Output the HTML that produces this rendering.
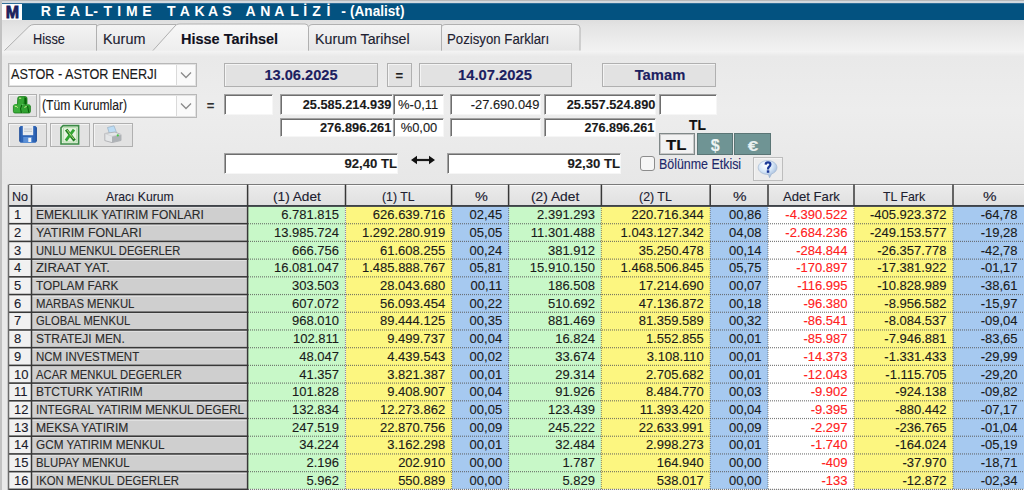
<!DOCTYPE html><html><head><meta charset="utf-8"><style>html,body{margin:0;padding:0;width:1024px;height:490px;overflow:hidden;position:relative;background:#e9e9e9}</style></head><body><div style="position:absolute;left:0.00px;top:0.00px;width:1024.00px;height:490.00px;background:#e9e9e9;"></div><div style="position:absolute;left:0.00px;top:0.00px;width:1024.00px;height:1.00px;background:#b9b9b9;"></div><div style="position:absolute;left:0.00px;top:1.00px;width:1024.00px;height:2.00px;background:#d3d9de;"></div><div style="position:absolute;left:2.20px;top:3.00px;width:1021.80px;height:17.00px;background:#035280;"></div><div style="position:absolute;left:2.20px;top:3.00px;width:1021.80px;height:1.00px;background:#2f6e98;"></div><div style="position:absolute;left:2.20px;top:4.00px;width:20.30px;height:16.00px;background:#fdfdfd;"></div><div style="position:absolute;top:4.66px;font:bold 16px/16px 'Liberation Sans', sans-serif;color:#1b1f5c;white-space:nowrap;-webkit-text-stroke:0.12px #1b1f5c;left:-287.50px;width:600px;text-align:center;transform-origin:50% 0;-webkit-text-stroke:0.8px #1b1f5c;">M</div><div style="position:absolute;top:4.25px;font:bold 14px/14px 'Liberation Sans', sans-serif;color:#ffffff;white-space:nowrap;-webkit-text-stroke:0.12px #ffffff;left:-254.20px;width:600px;text-align:center;transform-origin:50% 0;-webkit-text-stroke:0px;">R</div><div style="position:absolute;top:4.25px;font:bold 14px/14px 'Liberation Sans', sans-serif;color:#ffffff;white-space:nowrap;-webkit-text-stroke:0.12px #ffffff;left:-239.30px;width:600px;text-align:center;transform-origin:50% 0;-webkit-text-stroke:0px;">E</div><div style="position:absolute;top:4.25px;font:bold 14px/14px 'Liberation Sans', sans-serif;color:#ffffff;white-space:nowrap;-webkit-text-stroke:0.12px #ffffff;left:-225.00px;width:600px;text-align:center;transform-origin:50% 0;-webkit-text-stroke:0px;">A</div><div style="position:absolute;top:4.25px;font:bold 14px/14px 'Liberation Sans', sans-serif;color:#ffffff;white-space:nowrap;-webkit-text-stroke:0.12px #ffffff;left:-211.00px;width:600px;text-align:center;transform-origin:50% 0;-webkit-text-stroke:0px;">L</div><div style="position:absolute;top:4.25px;font:bold 14px/14px 'Liberation Sans', sans-serif;color:#ffffff;white-space:nowrap;-webkit-text-stroke:0.12px #ffffff;left:-204.50px;width:600px;text-align:center;transform-origin:50% 0;-webkit-text-stroke:0px;">-</div><div style="position:absolute;top:4.25px;font:bold 14px/14px 'Liberation Sans', sans-serif;color:#ffffff;white-space:nowrap;-webkit-text-stroke:0.12px #ffffff;left:-192.20px;width:600px;text-align:center;transform-origin:50% 0;-webkit-text-stroke:0px;">T</div><div style="position:absolute;top:4.25px;font:bold 14px/14px 'Liberation Sans', sans-serif;color:#ffffff;white-space:nowrap;-webkit-text-stroke:0.12px #ffffff;left:-180.90px;width:600px;text-align:center;transform-origin:50% 0;-webkit-text-stroke:0px;">I</div><div style="position:absolute;top:4.25px;font:bold 14px/14px 'Liberation Sans', sans-serif;color:#ffffff;white-space:nowrap;-webkit-text-stroke:0.12px #ffffff;left:-168.20px;width:600px;text-align:center;transform-origin:50% 0;-webkit-text-stroke:0px;">M</div><div style="position:absolute;top:4.25px;font:bold 14px/14px 'Liberation Sans', sans-serif;color:#ffffff;white-space:nowrap;-webkit-text-stroke:0.12px #ffffff;left:-153.20px;width:600px;text-align:center;transform-origin:50% 0;-webkit-text-stroke:0px;">E</div><div style="position:absolute;top:4.25px;font:bold 14px/14px 'Liberation Sans', sans-serif;color:#ffffff;white-space:nowrap;-webkit-text-stroke:0.12px #ffffff;left:-128.80px;width:600px;text-align:center;transform-origin:50% 0;-webkit-text-stroke:0px;">T</div><div style="position:absolute;top:4.25px;font:bold 14px/14px 'Liberation Sans', sans-serif;color:#ffffff;white-space:nowrap;-webkit-text-stroke:0.12px #ffffff;left:-115.20px;width:600px;text-align:center;transform-origin:50% 0;-webkit-text-stroke:0px;">A</div><div style="position:absolute;top:4.25px;font:bold 14px/14px 'Liberation Sans', sans-serif;color:#ffffff;white-space:nowrap;-webkit-text-stroke:0.12px #ffffff;left:-100.50px;width:600px;text-align:center;transform-origin:50% 0;-webkit-text-stroke:0px;">K</div><div style="position:absolute;top:4.25px;font:bold 14px/14px 'Liberation Sans', sans-serif;color:#ffffff;white-space:nowrap;-webkit-text-stroke:0.12px #ffffff;left:-87.00px;width:600px;text-align:center;transform-origin:50% 0;-webkit-text-stroke:0px;">A</div><div style="position:absolute;top:4.25px;font:bold 14px/14px 'Liberation Sans', sans-serif;color:#ffffff;white-space:nowrap;-webkit-text-stroke:0.12px #ffffff;left:-73.00px;width:600px;text-align:center;transform-origin:50% 0;-webkit-text-stroke:0px;">S</div><div style="position:absolute;top:4.25px;font:bold 14px/14px 'Liberation Sans', sans-serif;color:#ffffff;white-space:nowrap;-webkit-text-stroke:0.12px #ffffff;left:-49.40px;width:600px;text-align:center;transform-origin:50% 0;-webkit-text-stroke:0px;">A</div><div style="position:absolute;top:4.25px;font:bold 14px/14px 'Liberation Sans', sans-serif;color:#ffffff;white-space:nowrap;-webkit-text-stroke:0.12px #ffffff;left:-34.70px;width:600px;text-align:center;transform-origin:50% 0;-webkit-text-stroke:0px;">N</div><div style="position:absolute;top:4.25px;font:bold 14px/14px 'Liberation Sans', sans-serif;color:#ffffff;white-space:nowrap;-webkit-text-stroke:0.12px #ffffff;left:-20.70px;width:600px;text-align:center;transform-origin:50% 0;-webkit-text-stroke:0px;">A</div><div style="position:absolute;top:4.25px;font:bold 14px/14px 'Liberation Sans', sans-serif;color:#ffffff;white-space:nowrap;-webkit-text-stroke:0.12px #ffffff;left:-5.40px;width:600px;text-align:center;transform-origin:50% 0;-webkit-text-stroke:0px;">L</div><div style="position:absolute;top:4.25px;font:bold 14px/14px 'Liberation Sans', sans-serif;color:#ffffff;white-space:nowrap;-webkit-text-stroke:0.12px #ffffff;left:5.10px;width:600px;text-align:center;transform-origin:50% 0;-webkit-text-stroke:0px;">İ</div><div style="position:absolute;top:4.25px;font:bold 14px/14px 'Liberation Sans', sans-serif;color:#ffffff;white-space:nowrap;-webkit-text-stroke:0.12px #ffffff;left:16.50px;width:600px;text-align:center;transform-origin:50% 0;-webkit-text-stroke:0px;">Z</div><div style="position:absolute;top:4.25px;font:bold 14px/14px 'Liberation Sans', sans-serif;color:#ffffff;white-space:nowrap;-webkit-text-stroke:0.12px #ffffff;left:28.50px;width:600px;text-align:center;transform-origin:50% 0;-webkit-text-stroke:0px;">İ</div><div style="position:absolute;top:4.25px;font:bold 14px/14px 'Liberation Sans', sans-serif;color:#ffffff;white-space:nowrap;-webkit-text-stroke:0.12px #ffffff;left:43.50px;width:600px;text-align:center;transform-origin:50% 0;-webkit-text-stroke:0px;">-</div><div style="position:absolute;top:4.45px;font:bold 14px/14px 'Liberation Sans', sans-serif;color:#ffffff;white-space:nowrap;-webkit-text-stroke:0.12px #ffffff;left:349.94px;transform-origin:0 0;transform:scaleX(0.9718);-webkit-text-stroke:0px;">(Analist)</div><div style="position:absolute;left:0.00px;top:0.00px;width:2.00px;height:490.00px;background:#c2c2c2;"></div><div style="position:absolute;left:2.00px;top:20.00px;width:1022.00px;height:30.50px;background:linear-gradient(#dedede,#e4e4e4 20%,#f2f2f2);"></div><svg style="position:absolute;left:0;top:0" width="1024" height="60">
<defs><linearGradient id="tg" x1="0" y1="0" x2="0" y2="1"><stop offset="0" stop-color="#f4f4f4"/><stop offset="1" stop-color="#e6e6e6"/></linearGradient>
<linearGradient id="ta" x1="0" y1="0" x2="0" y2="1"><stop offset="0" stop-color="#f8f8f8"/><stop offset="1" stop-color="#eeeeee"/></linearGradient></defs>
<path d="M4.5 50.5 L29 26.5 Q31 24.5 34 24.5 L96.5 24.5 L96.5 50.5 Z" fill="url(#tg)"/>
<path d="M4.5 50.5 L29 26.5 Q31 24.5 34 24.5 L96.5 24.5 L96.5 50.5" fill="none" stroke="#b0b0b0" stroke-width="1"/>
<path d="M96.5 50.5 L96.5 28 Q96.5 24.5 101 24.5 L176 24.5 L153 50.5 Z" fill="url(#tg)"/>
<path d="M96.5 50.5 L96.5 28 Q96.5 24.5 101 24.5 L176 24.5" fill="none" stroke="#b0b0b0" stroke-width="1"/>
<path d="M308.5 50.5 L308.5 28 Q308.5 24.5 313 24.5 L441.5 24.5 L441.5 50.5 Z" fill="url(#tg)"/>
<path d="M308.5 50.5 L308.5 28 Q308.5 24.5 313 24.5 L441.5 24.5 L441.5 50.5" fill="none" stroke="#b0b0b0" stroke-width="1"/>
<path d="M441.5 50.5 L441.5 28 Q441.5 24.5 446 24.5 L576 24.5 Q580 24.5 580 28 L580 50.5 Z" fill="url(#tg)"/>
<path d="M441.5 50.5 L441.5 28 Q441.5 24.5 446 24.5 L576 24.5 Q580 24.5 580 28 L580 50.5" fill="none" stroke="#b0b0b0" stroke-width="1"/>
<path d="M153 50.5 L175 26 Q176.5 24 179 24 L305 24 Q308.5 24 308.5 27.5 L308.5 50.5 Z" fill="url(#ta)"/>
<path d="M153 50.5 L175 26 Q176.5 24 179 24 L305 24 Q308.5 24 308.5 27.5 L308.5 50.5" fill="none" stroke="#b0b0b0" stroke-width="1"/>
</svg><div style="position:absolute;top:31.95px;font:normal 14px/14px 'Liberation Sans', sans-serif;color:#202030;white-space:nowrap;-webkit-text-stroke:0.12px #202030;left:33.34px;transform-origin:0 0;transform:scaleX(0.9090);">Hisse</div><div style="position:absolute;top:31.95px;font:normal 14px/14px 'Liberation Sans', sans-serif;color:#202030;white-space:nowrap;-webkit-text-stroke:0.12px #202030;left:103.14px;transform-origin:0 0;transform:scaleX(1.0288);">Kurum</div><div style="position:absolute;top:31.95px;font:bold 14px/14px 'Liberation Sans', sans-serif;color:#101020;white-space:nowrap;-webkit-text-stroke:0.12px #101020;left:181.44px;transform-origin:0 0;transform:scaleX(1.0343);">Hisse Tarihsel</div><div style="position:absolute;top:31.95px;font:normal 14px/14px 'Liberation Sans', sans-serif;color:#202030;white-space:nowrap;-webkit-text-stroke:0.12px #202030;left:315.44px;transform-origin:0 0;transform:scaleX(1.0156);">Kurum Tarihsel</div><div style="position:absolute;top:31.95px;font:normal 14px/14px 'Liberation Sans', sans-serif;color:#202030;white-space:nowrap;-webkit-text-stroke:0.12px #202030;left:447.44px;transform-origin:0 0;transform:scaleX(0.9443);">Pozisyon Farkları</div><div style="position:absolute;left:2.00px;top:50.50px;width:1022.00px;height:133.50px;background:linear-gradient(#f4f4f4 0,#e9e9e9 4%,#ededed 45%,#e7e7e7);"></div><div style="position:absolute;left:8.00px;top:63.30px;width:189.00px;height:23.70px;background:#fff;border:1px solid #b8b8b8;box-sizing:border-box;box-shadow:inset 0 0 0 1px #e2e2e2;"></div><div style="position:absolute;left:176.00px;top:65.30px;width:19.00px;height:19.70px;background:#fafafa;border-left:1.5px solid #dadada;box-sizing:border-box;"></div><svg style="position:absolute;left:180.0px;top:71.2px" width="12" height="8"><path d="M1 1.5 L6 6.5 L11 1.5" fill="none" stroke="#8a8a8a" stroke-width="1.3"/></svg><div style="position:absolute;top:66.75px;font:normal 14px/14px 'Liberation Sans', sans-serif;color:#1a1a1a;white-space:nowrap;-webkit-text-stroke:0.12px #1a1a1a;left:10.54px;transform-origin:0 0;transform:scaleX(0.9053);">ASTOR - ASTOR ENERJI</div><div style="position:absolute;left:223.50px;top:63.30px;width:154.00px;height:24.00px;background:#e2e2e2;border:1px solid #b0b0b0;box-sizing:border-box;box-shadow:inset 1px 1px 0 #f4f4f4;"></div><div style="position:absolute;top:68.45px;font:bold 14px/14px 'Liberation Sans', sans-serif;color:#1c2060;white-space:nowrap;-webkit-text-stroke:0.12px #1c2060;left:0.50px;width:600px;text-align:center;transform-origin:50% 0;transform:scaleX(1.0436);">13.06.2025</div><div style="position:absolute;left:387.00px;top:63.30px;width:24.70px;height:24.00px;background:#e2e2e2;border:1px solid #b0b0b0;box-sizing:border-box;box-shadow:inset 1px 1px 0 #f4f4f4;"></div><div style="position:absolute;top:68.50px;font:bold 13px/13px 'Liberation Sans', sans-serif;color:#202020;white-space:nowrap;-webkit-text-stroke:0.12px #202020;left:99.30px;width:600px;text-align:center;transform-origin:50% 0;">=</div><div style="position:absolute;left:418.70px;top:63.30px;width:153.80px;height:24.00px;background:#e2e2e2;border:1px solid #b0b0b0;box-sizing:border-box;box-shadow:inset 1px 1px 0 #f4f4f4;"></div><div style="position:absolute;top:68.45px;font:bold 14px/14px 'Liberation Sans', sans-serif;color:#1c2060;white-space:nowrap;-webkit-text-stroke:0.12px #1c2060;left:195.40px;width:600px;text-align:center;transform-origin:50% 0;transform:scaleX(1.0550);">14.07.2025</div><div style="position:absolute;left:602.40px;top:63.00px;width:114.10px;height:23.90px;background:#e2e2e2;border:1px solid #b0b0b0;box-sizing:border-box;box-shadow:inset 1px 1px 0 #f4f4f4;"></div><div style="position:absolute;top:68.35px;font:bold 14px/14px 'Liberation Sans', sans-serif;color:#1c2060;white-space:nowrap;-webkit-text-stroke:0.12px #1c2060;left:359.50px;width:600px;text-align:center;transform-origin:50% 0;transform:scaleX(1.0550);">Tamam</div><div style="position:absolute;left:7.70px;top:93.70px;width:29.30px;height:23.80px;background:#e2e2e2;border:1px solid #b0b0b0;box-sizing:border-box;box-shadow:inset 1px 1px 0 #f4f4f4;"></div><div style="position:absolute;left:39.30px;top:94.00px;width:157.70px;height:23.50px;background:#fff;border:1px solid #b8b8b8;box-sizing:border-box;box-shadow:inset 0 0 0 1px #e2e2e2;"></div><div style="position:absolute;left:176.00px;top:96.00px;width:19.00px;height:19.50px;background:#fafafa;border-left:1.5px solid #dadada;box-sizing:border-box;"></div><svg style="position:absolute;left:180.0px;top:101.8px" width="12" height="8"><path d="M1 1.5 L6 6.5 L11 1.5" fill="none" stroke="#8a8a8a" stroke-width="1.3"/></svg><div style="position:absolute;top:98.15px;font:normal 14px/14px 'Liberation Sans', sans-serif;color:#1a1a1a;white-space:nowrap;-webkit-text-stroke:0.12px #1a1a1a;left:41.94px;transform-origin:0 0;transform:scaleX(0.8685);">(Tüm Kurumlar)</div><div style="position:absolute;top:98.50px;font:bold 13px/13px 'Liberation Sans', sans-serif;color:#303030;white-space:nowrap;-webkit-text-stroke:0.12px #303030;left:-89.50px;width:600px;text-align:center;transform-origin:50% 0;">=</div><div style="position:absolute;left:223.50px;top:94.00px;width:49.20px;height:20.50px;background:#fff;border-top:1px solid #a2a2a2;border-left:1px solid #a2a2a2;border-bottom:1px solid #f6f6f6;border-right:1px solid #f6f6f6;box-sizing:border-box;box-shadow:inset 1px 1px 0 #6e6e6e;"></div><div style="position:absolute;left:279.80px;top:94.00px;width:113.00px;height:20.50px;background:#fff;border-top:1px solid #a2a2a2;border-left:1px solid #a2a2a2;border-bottom:1px solid #f6f6f6;border-right:1px solid #f6f6f6;box-sizing:border-box;box-shadow:inset 1px 1px 0 #6e6e6e;"></div><div style="position:absolute;left:392.80px;top:94.00px;width:51.20px;height:20.50px;background:#fff;border-top:1px solid #a2a2a2;border-left:1px solid #a2a2a2;border-bottom:1px solid #f6f6f6;border-right:1px solid #f6f6f6;box-sizing:border-box;box-shadow:inset 1px 1px 0 #6e6e6e;"></div><div style="position:absolute;left:449.60px;top:94.00px;width:91.60px;height:20.50px;background:#fff;border-top:1px solid #a2a2a2;border-left:1px solid #a2a2a2;border-bottom:1px solid #f6f6f6;border-right:1px solid #f6f6f6;box-sizing:border-box;box-shadow:inset 1px 1px 0 #6e6e6e;"></div><div style="position:absolute;left:544.00px;top:94.00px;width:111.50px;height:20.50px;background:#fff;border-top:1px solid #a2a2a2;border-left:1px solid #a2a2a2;border-bottom:1px solid #f6f6f6;border-right:1px solid #f6f6f6;box-sizing:border-box;box-shadow:inset 1px 1px 0 #6e6e6e;"></div><div style="position:absolute;left:659.30px;top:94.00px;width:58.20px;height:20.50px;background:#fff;border-top:1px solid #a2a2a2;border-left:1px solid #a2a2a2;border-bottom:1px solid #f6f6f6;border-right:1px solid #f6f6f6;box-sizing:border-box;box-shadow:inset 1px 1px 0 #6e6e6e;"></div><div style="position:absolute;top:97.90px;font:bold 13px/13px 'Liberation Sans', sans-serif;color:#1a1a1a;white-space:nowrap;-webkit-text-stroke:0.12px #1a1a1a;right:632.68px;transform-origin:100% 0;transform:scaleX(0.9809);">25.585.214.939</div><div style="position:absolute;top:97.90px;font:normal 13px/13px 'Liberation Sans', sans-serif;color:#1a1a1a;white-space:nowrap;-webkit-text-stroke:0.12px #1a1a1a;left:118.20px;width:600px;text-align:center;transform-origin:50% 0;">%-0,11</div><div style="position:absolute;top:97.90px;font:normal 13px/13px 'Liberation Sans', sans-serif;color:#1a1a1a;white-space:nowrap;-webkit-text-stroke:0.12px #1a1a1a;right:484.48px;transform-origin:100% 0;transform:scaleX(0.9892);">-27.690.049</div><div style="position:absolute;top:97.90px;font:bold 13px/13px 'Liberation Sans', sans-serif;color:#1a1a1a;white-space:nowrap;-webkit-text-stroke:0.12px #1a1a1a;right:368.78px;transform-origin:100% 0;transform:scaleX(0.9820);">25.557.524.890</div><div style="position:absolute;left:279.80px;top:117.70px;width:113.00px;height:19.70px;background:#fff;border-top:1px solid #a2a2a2;border-left:1px solid #a2a2a2;border-bottom:1px solid #f6f6f6;border-right:1px solid #f6f6f6;box-sizing:border-box;box-shadow:inset 1px 1px 0 #6e6e6e;"></div><div style="position:absolute;left:392.80px;top:117.70px;width:51.20px;height:19.70px;background:#fff;border-top:1px solid #a2a2a2;border-left:1px solid #a2a2a2;border-bottom:1px solid #f6f6f6;border-right:1px solid #f6f6f6;box-sizing:border-box;box-shadow:inset 1px 1px 0 #6e6e6e;"></div><div style="position:absolute;left:449.60px;top:117.70px;width:91.60px;height:19.70px;background:#fff;border-top:1px solid #a2a2a2;border-left:1px solid #a2a2a2;border-bottom:1px solid #f6f6f6;border-right:1px solid #f6f6f6;box-sizing:border-box;box-shadow:inset 1px 1px 0 #6e6e6e;"></div><div style="position:absolute;left:544.00px;top:117.70px;width:111.50px;height:19.70px;background:#fff;border-top:1px solid #a2a2a2;border-left:1px solid #a2a2a2;border-bottom:1px solid #f6f6f6;border-right:1px solid #f6f6f6;box-sizing:border-box;box-shadow:inset 1px 1px 0 #6e6e6e;"></div><div style="position:absolute;top:120.90px;font:bold 13px/13px 'Liberation Sans', sans-serif;color:#1a1a1a;white-space:nowrap;-webkit-text-stroke:0.12px #1a1a1a;right:633.08px;transform-origin:100% 0;transform:scaleX(0.9868);">276.896.261</div><div style="position:absolute;top:120.90px;font:normal 13px/13px 'Liberation Sans', sans-serif;color:#1a1a1a;white-space:nowrap;-webkit-text-stroke:0.12px #1a1a1a;left:118.60px;width:600px;text-align:center;transform-origin:50% 0;transform:scaleX(0.9913);">%0,00</div><div style="position:absolute;top:120.90px;font:bold 13px/13px 'Liberation Sans', sans-serif;color:#1a1a1a;white-space:nowrap;-webkit-text-stroke:0.12px #1a1a1a;right:369.68px;transform-origin:100% 0;transform:scaleX(0.9661);">276.896.261</div><div style="position:absolute;top:118.15px;font:bold 14px/14px 'Liberation Sans', sans-serif;color:#101010;white-space:nowrap;-webkit-text-stroke:0.12px #101010;left:689.44px;transform-origin:0 0;transform:scaleX(0.9893);">TL</div><div style="position:absolute;left:7.80px;top:123.30px;width:39.70px;height:23.90px;background:#e2e2e2;border:1px solid #b0b0b0;box-sizing:border-box;box-shadow:inset 1px 1px 0 #f4f4f4;"></div><div style="position:absolute;left:50.40px;top:123.30px;width:39.60px;height:23.90px;background:#e2e2e2;border:1px solid #b0b0b0;box-sizing:border-box;box-shadow:inset 1px 1px 0 #f4f4f4;"></div><div style="position:absolute;left:93.20px;top:123.30px;width:39.40px;height:23.90px;background:#e2e2e2;border:1px solid #b0b0b0;box-sizing:border-box;box-shadow:inset 1px 1px 0 #f4f4f4;"></div><div style="position:absolute;left:658.90px;top:133.40px;width:35.90px;height:21.90px;background:#f2f2f2;border:1px solid #808888;box-sizing:border-box;box-shadow:inset 0 0 0 1px #c8c8c8;"></div><div style="position:absolute;left:696.90px;top:133.40px;width:35.90px;height:21.90px;background:#6f9494;border:1px solid #5a7575;box-sizing:border-box;"></div><div style="position:absolute;left:733.90px;top:133.40px;width:36.70px;height:21.90px;background:#6f9494;border:1px solid #5a7575;box-sizing:border-box;"></div><div style="position:absolute;top:137.95px;font:bold 14px/14px 'Liberation Sans', sans-serif;color:#101010;white-space:nowrap;-webkit-text-stroke:0.12px #101010;left:666.14px;transform-origin:0 0;transform:scaleX(1.1939);">TL</div><div style="position:absolute;top:137.76px;font:bold 16px/16px 'Liberation Sans', sans-serif;color:#eef4f4;white-space:nowrap;-webkit-text-stroke:0.12px #eef4f4;left:415.20px;width:600px;text-align:center;transform-origin:50% 0;">$</div><div style="position:absolute;top:137.70px;font:bold 15px/15px 'Liberation Sans', sans-serif;color:#e8f0f0;white-space:nowrap;-webkit-text-stroke:0.12px #e8f0f0;left:452.60px;width:600px;text-align:center;transform-origin:50% 0;transform:scaleX(1.2586);">€</div><div style="position:absolute;left:223.90px;top:153.00px;width:173.90px;height:21.00px;background:#fff;border-top:1px solid #a2a2a2;border-left:1px solid #a2a2a2;border-bottom:1px solid #f6f6f6;border-right:1px solid #f6f6f6;box-sizing:border-box;box-shadow:inset 1px 1px 0 #6e6e6e;"></div><div style="position:absolute;left:447.00px;top:153.00px;width:174.00px;height:21.00px;background:#fff;border-top:1px solid #a2a2a2;border-left:1px solid #a2a2a2;border-bottom:1px solid #f6f6f6;border-right:1px solid #f6f6f6;box-sizing:border-box;box-shadow:inset 1px 1px 0 #6e6e6e;"></div><div style="position:absolute;top:156.70px;font:bold 13px/13px 'Liberation Sans', sans-serif;color:#1a1a1a;white-space:nowrap;-webkit-text-stroke:0.12px #1a1a1a;right:626.88px;transform-origin:100% 0;transform:scaleX(1.0118);">92,40 TL</div><div style="position:absolute;top:156.70px;font:bold 13px/13px 'Liberation Sans', sans-serif;color:#1a1a1a;white-space:nowrap;-webkit-text-stroke:0.12px #1a1a1a;right:404.18px;transform-origin:100% 0;transform:scaleX(1.0118);">92,30 TL</div><svg style="position:absolute;left:409px;top:154px" width="28" height="12"><path d="M7.5 6 L20.5 6" stroke="#1a1a1a" stroke-width="2.2"/><path d="M2 6 L8 1.8 L8 10.2 Z M26 6 L20 1.8 L20 10.2 Z" fill="#111"/></svg><div style="position:absolute;left:640.00px;top:156.00px;width:15.00px;height:14.60px;background:#f6f6f6;border:1px solid #8c8c8c;border-radius:3px;box-sizing:border-box;"></div><div style="position:absolute;top:156.75px;font:normal 14px/14px 'Liberation Sans', sans-serif;color:#20286a;white-space:nowrap;-webkit-text-stroke:0.12px #20286a;left:659.14px;transform-origin:0 0;transform:scaleX(0.8869);">Bölünme Etkisi</div><div style="position:absolute;left:753.20px;top:157.20px;width:29.50px;height:24.30px;background:#ececec;border:1px solid #bdbdbd;box-sizing:border-box;box-shadow:inset 1px 1px 0 #f4f4f4;"></div><svg style="position:absolute;left:12px;top:95px" width="20" height="20" viewBox="0 0 20 20"><path d="M5.8 3 Q6 1.6 7.6 1.6 L13.2 1.6 Q15 1.6 15 3.4 L15 9.6 L5.4 9.6 Z" fill="#35a635"/><path d="M12.2 2.2 Q14.6 2 14.8 4 L14.8 9.6 L11.6 9.6 Z" fill="#137a13"/><path d="M1.4 10.6 Q1.6 9 3.2 9 L9.6 9 Q11 9 11 10.6 L11 16.4 Q11 18 9.4 18 L3 18 Q1.4 18 1.4 16.4 Z" fill="#3aae3a"/><path d="M10.6 10.4 Q10.8 9.2 12.2 9.2 L16.8 9.2 Q18.4 9.2 18.4 10.8 L18.4 16.4 Q18.4 18 16.8 18 L11.6 18 Q10 18 10 16.4 Z" fill="#30a230"/><path d="M9.8 10 L8.6 13.6 L9.4 18 M15.6 11 L16.8 17.6 M13.6 9.4 L13.6 3" stroke="#0b5e0b" stroke-width="1.1" fill="none"/><path d="M7 3.2 L9.2 3.2 M2.8 11.2 L4.8 11.6 L5.6 12.6 M12.4 12.4 L14.6 11.4" stroke="#d6ec98" stroke-width="1" fill="none"/><path d="M5.4 9.6 L5.8 3 Q6 1.6 7.6 1.6 L13.2 1.6 Q15 1.6 15 3.4 L15 9 M1.4 10.6 L1.4 16.4 Q1.4 18 3 18 L16.8 18 Q18.4 18 18.4 16.4 L18.4 10.8" stroke="#167a16" stroke-width="0.8" fill="none"/></svg><svg style="position:absolute;left:18px;top:125px" width="20" height="19" viewBox="0 0 20 19"><path d="M1.8 2.2 Q1.8 1 3 1 L17 1 Q18.3 1 18.3 2.2 L18.3 16.6 Q18.3 17.8 17 17.8 L3 17.8 Q1.8 17.8 1.8 16.6 Z" fill="#2d64b6"/><rect x="4.8" y="1" width="10.4" height="9.2" fill="#e9ecef"/><path d="M6 4 L14 4 M6 6.3 L14 6.3" stroke="#b8bcc4" stroke-width="0.8"/><rect x="5.2" y="12" width="9" height="5.8" fill="#5a8fd6"/><rect x="10.3" y="12.8" width="2.8" height="4.2" fill="#f4f6f8"/><path d="M1.8 2.2 L1.8 16.6 M18.3 2.2 L18.3 16.6" stroke="#1d4c98" stroke-width="1.2"/></svg><svg style="position:absolute;left:59px;top:124px" width="22" height="22" viewBox="0 0 22 22"><path d="M4.2 1.6 L19.6 1.6 L19.6 20 L2 20 L2 3.8 Z" fill="#e6f3e0" stroke="#3b8a45" stroke-width="1.6"/><path d="M4.6 3.6 L17.6 3.6 L17.6 18 L4 18 Z" fill="none" stroke="#b8dcb0" stroke-width="1"/><path d="M7.2 5.6 L15.6 16.6" stroke="#1f7f22" stroke-width="3.2"/><path d="M15 5.6 L6.8 16.6" stroke="#33a533" stroke-width="2.8"/><path d="M8 6 L14.8 15" stroke="#c0e080" stroke-width="0.9"/></svg><svg style="position:absolute;left:103px;top:124px" width="20" height="20" viewBox="0 0 20 20"><path d="M4.5 3.5 L11 1.8 L13.5 8.5 L6.5 10 Z" fill="#bcdcf4" stroke="#9ab0c4" stroke-width="0.7"/><path d="M1.8 9.5 L12 8 L18 10.5 L18 16.5 L9 18.6 L1.8 16.6 Z" fill="#e4e6e8" stroke="#a8aaad" stroke-width="0.8"/><path d="M9 12.2 L18 10.5 L18 16.5 L9 18.6 Z" fill="#aeb2b6"/><path d="M1.8 9.5 L9 12.2 L18 10.5" fill="none" stroke="#d0d2d4" stroke-width="0.8"/><circle cx="14.8" cy="11.4" r="1.1" fill="#44c844"/></svg><svg style="position:absolute;left:756px;top:159px" width="24" height="21" viewBox="0 0 24 21"><defs><radialGradient id="hb" cx="0.4" cy="0.28" r="0.8"><stop offset="0" stop-color="#ffffff"/><stop offset="0.45" stop-color="#d8e8f8"/><stop offset="0.8" stop-color="#a9c0de"/><stop offset="1" stop-color="#7d96bc"/></radialGradient></defs><path d="M11.6 1.6 C17 1.6 21 4.8 21 8.6 C21 11.6 18.6 14 15.6 14.9 L13.6 18.8 L12.4 15.5 C6.6 15.5 2.2 12.6 2.2 8.6 C2.2 4.8 6.2 1.6 11.6 1.6 Z" fill="url(#hb)" stroke="#9ab0cc" stroke-width="0.6"/><path d="M9.6 5.6 Q9.8 3.4 12 3.4 Q14.4 3.4 14.4 5.6 Q14.4 7 12.9 8 Q12 8.6 12 10.4" fill="none" stroke="#1a3896" stroke-width="2.2"/><rect x="10.8" y="11.3" width="2.5" height="2.5" fill="#1a3896"/></svg><div style="position:absolute;left:8.50px;top:184.00px;width:1015.50px;height:22.00px;background:linear-gradient(#ebebeb,#e0e0e0);border-top:1px solid #7a7a7a;box-sizing:border-box;box-shadow:inset 0 1px 0 #fafafa, inset 1px 0 0 #fafafa;"></div><div style="position:absolute;top:189.50px;font:normal 13px/13px 'Liberation Sans', sans-serif;color:#202030;white-space:nowrap;-webkit-text-stroke:0.12px #202030;left:12.48px;transform-origin:0 0;transform:scaleX(0.9652);">No</div><div style="position:absolute;top:189.50px;font:normal 13px/13px 'Liberation Sans', sans-serif;color:#202030;white-space:nowrap;-webkit-text-stroke:0.12px #202030;left:105.78px;transform-origin:0 0;transform:scaleX(0.9377);">Aracı Kurum</div><div style="position:absolute;top:189.50px;font:normal 13px/13px 'Liberation Sans', sans-serif;color:#202030;white-space:nowrap;-webkit-text-stroke:0.12px #202030;left:273.48px;transform-origin:0 0;transform:scaleX(1.0497);">(1) Adet</div><div style="position:absolute;top:189.50px;font:normal 13px/13px 'Liberation Sans', sans-serif;color:#202030;white-space:nowrap;-webkit-text-stroke:0.12px #202030;left:382.48px;transform-origin:0 0;transform:scaleX(0.9472);">(1) TL</div><div style="position:absolute;top:189.50px;font:normal 13px/13px 'Liberation Sans', sans-serif;color:#202030;white-space:nowrap;-webkit-text-stroke:0.12px #202030;left:474.98px;transform-origin:0 0;transform:scaleX(1.1108);">%</div><div style="position:absolute;top:189.50px;font:normal 13px/13px 'Liberation Sans', sans-serif;color:#202030;white-space:nowrap;-webkit-text-stroke:0.12px #202030;left:531.48px;transform-origin:0 0;transform:scaleX(1.0605);">(2) Adet</div><div style="position:absolute;top:189.50px;font:normal 13px/13px 'Liberation Sans', sans-serif;color:#202030;white-space:nowrap;-webkit-text-stroke:0.12px #202030;left:639.48px;transform-origin:0 0;transform:scaleX(0.9530);">(2) TL</div><div style="position:absolute;top:189.50px;font:normal 13px/13px 'Liberation Sans', sans-serif;color:#202030;white-space:nowrap;-webkit-text-stroke:0.12px #202030;left:732.78px;transform-origin:0 0;transform:scaleX(1.1714);">%</div><div style="position:absolute;top:189.50px;font:normal 13px/13px 'Liberation Sans', sans-serif;color:#202030;white-space:nowrap;-webkit-text-stroke:0.12px #202030;left:782.98px;transform-origin:0 0;transform:scaleX(1.0086);">Adet Fark</div><div style="position:absolute;top:189.50px;font:normal 13px/13px 'Liberation Sans', sans-serif;color:#202030;white-space:nowrap;-webkit-text-stroke:0.12px #202030;left:882.98px;transform-origin:0 0;transform:scaleX(0.9499);">TL Fark</div><div style="position:absolute;top:189.50px;font:normal 13px/13px 'Liberation Sans', sans-serif;color:#202030;white-space:nowrap;-webkit-text-stroke:0.12px #202030;left:982.98px;transform-origin:0 0;transform:scaleX(1.1714);">%</div><div style="position:absolute;left:8.50px;top:206.00px;width:23.00px;height:17.71px;background:#f1f1f1;box-shadow:inset 0 1.5px 0 #fafafa;"></div><div style="position:absolute;left:31.50px;top:206.00px;width:216.10px;height:17.71px;background:#cfcfcf;box-shadow:inset 0 1.5px 0 #f2f2f2;"></div><div style="position:absolute;left:247.60px;top:206.00px;width:97.90px;height:17.71px;background:#c8f8c8;"></div><div style="position:absolute;left:345.50px;top:206.00px;width:106.10px;height:17.71px;background:#fcf680;"></div><div style="position:absolute;left:451.60px;top:206.00px;width:57.00px;height:17.71px;background:#a6c9f0;"></div><div style="position:absolute;left:508.60px;top:206.00px;width:92.80px;height:17.71px;background:#c8f8c8;"></div><div style="position:absolute;left:601.40px;top:206.00px;width:108.80px;height:17.71px;background:#fcf680;"></div><div style="position:absolute;left:710.20px;top:206.00px;width:57.80px;height:17.71px;background:#a6c9f0;"></div><div style="position:absolute;left:768.00px;top:206.00px;width:86.00px;height:17.71px;background:#ffffff;"></div><div style="position:absolute;left:854.00px;top:206.00px;width:99.00px;height:17.71px;background:#fcf680;"></div><div style="position:absolute;left:953.00px;top:206.00px;width:71.00px;height:17.71px;background:#a6c9f0;"></div><div style="position:absolute;left:8.50px;top:223.71px;width:23.00px;height:17.71px;background:#f1f1f1;box-shadow:inset 0 1.5px 0 #fafafa;"></div><div style="position:absolute;left:31.50px;top:223.71px;width:216.10px;height:17.71px;background:#cfcfcf;box-shadow:inset 0 1.5px 0 #f2f2f2;"></div><div style="position:absolute;left:247.60px;top:223.71px;width:97.90px;height:17.71px;background:#c8f8c8;"></div><div style="position:absolute;left:345.50px;top:223.71px;width:106.10px;height:17.71px;background:#fcf680;"></div><div style="position:absolute;left:451.60px;top:223.71px;width:57.00px;height:17.71px;background:#a6c9f0;"></div><div style="position:absolute;left:508.60px;top:223.71px;width:92.80px;height:17.71px;background:#c8f8c8;"></div><div style="position:absolute;left:601.40px;top:223.71px;width:108.80px;height:17.71px;background:#fcf680;"></div><div style="position:absolute;left:710.20px;top:223.71px;width:57.80px;height:17.71px;background:#a6c9f0;"></div><div style="position:absolute;left:768.00px;top:223.71px;width:86.00px;height:17.71px;background:#ffffff;"></div><div style="position:absolute;left:854.00px;top:223.71px;width:99.00px;height:17.71px;background:#fcf680;"></div><div style="position:absolute;left:953.00px;top:223.71px;width:71.00px;height:17.71px;background:#a6c9f0;"></div><div style="position:absolute;left:8.50px;top:241.42px;width:23.00px;height:17.71px;background:#f1f1f1;box-shadow:inset 0 1.5px 0 #fafafa;"></div><div style="position:absolute;left:31.50px;top:241.42px;width:216.10px;height:17.71px;background:#cfcfcf;box-shadow:inset 0 1.5px 0 #f2f2f2;"></div><div style="position:absolute;left:247.60px;top:241.42px;width:97.90px;height:17.71px;background:#c8f8c8;"></div><div style="position:absolute;left:345.50px;top:241.42px;width:106.10px;height:17.71px;background:#fcf680;"></div><div style="position:absolute;left:451.60px;top:241.42px;width:57.00px;height:17.71px;background:#a6c9f0;"></div><div style="position:absolute;left:508.60px;top:241.42px;width:92.80px;height:17.71px;background:#c8f8c8;"></div><div style="position:absolute;left:601.40px;top:241.42px;width:108.80px;height:17.71px;background:#fcf680;"></div><div style="position:absolute;left:710.20px;top:241.42px;width:57.80px;height:17.71px;background:#a6c9f0;"></div><div style="position:absolute;left:768.00px;top:241.42px;width:86.00px;height:17.71px;background:#ffffff;"></div><div style="position:absolute;left:854.00px;top:241.42px;width:99.00px;height:17.71px;background:#fcf680;"></div><div style="position:absolute;left:953.00px;top:241.42px;width:71.00px;height:17.71px;background:#a6c9f0;"></div><div style="position:absolute;left:8.50px;top:259.13px;width:23.00px;height:17.71px;background:#f1f1f1;box-shadow:inset 0 1.5px 0 #fafafa;"></div><div style="position:absolute;left:31.50px;top:259.13px;width:216.10px;height:17.71px;background:#cfcfcf;box-shadow:inset 0 1.5px 0 #f2f2f2;"></div><div style="position:absolute;left:247.60px;top:259.13px;width:97.90px;height:17.71px;background:#c8f8c8;"></div><div style="position:absolute;left:345.50px;top:259.13px;width:106.10px;height:17.71px;background:#fcf680;"></div><div style="position:absolute;left:451.60px;top:259.13px;width:57.00px;height:17.71px;background:#a6c9f0;"></div><div style="position:absolute;left:508.60px;top:259.13px;width:92.80px;height:17.71px;background:#c8f8c8;"></div><div style="position:absolute;left:601.40px;top:259.13px;width:108.80px;height:17.71px;background:#fcf680;"></div><div style="position:absolute;left:710.20px;top:259.13px;width:57.80px;height:17.71px;background:#a6c9f0;"></div><div style="position:absolute;left:768.00px;top:259.13px;width:86.00px;height:17.71px;background:#ffffff;"></div><div style="position:absolute;left:854.00px;top:259.13px;width:99.00px;height:17.71px;background:#fcf680;"></div><div style="position:absolute;left:953.00px;top:259.13px;width:71.00px;height:17.71px;background:#a6c9f0;"></div><div style="position:absolute;left:8.50px;top:276.84px;width:23.00px;height:17.71px;background:#f1f1f1;box-shadow:inset 0 1.5px 0 #fafafa;"></div><div style="position:absolute;left:31.50px;top:276.84px;width:216.10px;height:17.71px;background:#cfcfcf;box-shadow:inset 0 1.5px 0 #f2f2f2;"></div><div style="position:absolute;left:247.60px;top:276.84px;width:97.90px;height:17.71px;background:#c8f8c8;"></div><div style="position:absolute;left:345.50px;top:276.84px;width:106.10px;height:17.71px;background:#fcf680;"></div><div style="position:absolute;left:451.60px;top:276.84px;width:57.00px;height:17.71px;background:#a6c9f0;"></div><div style="position:absolute;left:508.60px;top:276.84px;width:92.80px;height:17.71px;background:#c8f8c8;"></div><div style="position:absolute;left:601.40px;top:276.84px;width:108.80px;height:17.71px;background:#fcf680;"></div><div style="position:absolute;left:710.20px;top:276.84px;width:57.80px;height:17.71px;background:#a6c9f0;"></div><div style="position:absolute;left:768.00px;top:276.84px;width:86.00px;height:17.71px;background:#ffffff;"></div><div style="position:absolute;left:854.00px;top:276.84px;width:99.00px;height:17.71px;background:#fcf680;"></div><div style="position:absolute;left:953.00px;top:276.84px;width:71.00px;height:17.71px;background:#a6c9f0;"></div><div style="position:absolute;left:8.50px;top:294.55px;width:23.00px;height:17.71px;background:#f1f1f1;box-shadow:inset 0 1.5px 0 #fafafa;"></div><div style="position:absolute;left:31.50px;top:294.55px;width:216.10px;height:17.71px;background:#cfcfcf;box-shadow:inset 0 1.5px 0 #f2f2f2;"></div><div style="position:absolute;left:247.60px;top:294.55px;width:97.90px;height:17.71px;background:#c8f8c8;"></div><div style="position:absolute;left:345.50px;top:294.55px;width:106.10px;height:17.71px;background:#fcf680;"></div><div style="position:absolute;left:451.60px;top:294.55px;width:57.00px;height:17.71px;background:#a6c9f0;"></div><div style="position:absolute;left:508.60px;top:294.55px;width:92.80px;height:17.71px;background:#c8f8c8;"></div><div style="position:absolute;left:601.40px;top:294.55px;width:108.80px;height:17.71px;background:#fcf680;"></div><div style="position:absolute;left:710.20px;top:294.55px;width:57.80px;height:17.71px;background:#a6c9f0;"></div><div style="position:absolute;left:768.00px;top:294.55px;width:86.00px;height:17.71px;background:#ffffff;"></div><div style="position:absolute;left:854.00px;top:294.55px;width:99.00px;height:17.71px;background:#fcf680;"></div><div style="position:absolute;left:953.00px;top:294.55px;width:71.00px;height:17.71px;background:#a6c9f0;"></div><div style="position:absolute;left:8.50px;top:312.26px;width:23.00px;height:17.71px;background:#f1f1f1;box-shadow:inset 0 1.5px 0 #fafafa;"></div><div style="position:absolute;left:31.50px;top:312.26px;width:216.10px;height:17.71px;background:#cfcfcf;box-shadow:inset 0 1.5px 0 #f2f2f2;"></div><div style="position:absolute;left:247.60px;top:312.26px;width:97.90px;height:17.71px;background:#c8f8c8;"></div><div style="position:absolute;left:345.50px;top:312.26px;width:106.10px;height:17.71px;background:#fcf680;"></div><div style="position:absolute;left:451.60px;top:312.26px;width:57.00px;height:17.71px;background:#a6c9f0;"></div><div style="position:absolute;left:508.60px;top:312.26px;width:92.80px;height:17.71px;background:#c8f8c8;"></div><div style="position:absolute;left:601.40px;top:312.26px;width:108.80px;height:17.71px;background:#fcf680;"></div><div style="position:absolute;left:710.20px;top:312.26px;width:57.80px;height:17.71px;background:#a6c9f0;"></div><div style="position:absolute;left:768.00px;top:312.26px;width:86.00px;height:17.71px;background:#ffffff;"></div><div style="position:absolute;left:854.00px;top:312.26px;width:99.00px;height:17.71px;background:#fcf680;"></div><div style="position:absolute;left:953.00px;top:312.26px;width:71.00px;height:17.71px;background:#a6c9f0;"></div><div style="position:absolute;left:8.50px;top:329.97px;width:23.00px;height:17.71px;background:#f1f1f1;box-shadow:inset 0 1.5px 0 #fafafa;"></div><div style="position:absolute;left:31.50px;top:329.97px;width:216.10px;height:17.71px;background:#cfcfcf;box-shadow:inset 0 1.5px 0 #f2f2f2;"></div><div style="position:absolute;left:247.60px;top:329.97px;width:97.90px;height:17.71px;background:#c8f8c8;"></div><div style="position:absolute;left:345.50px;top:329.97px;width:106.10px;height:17.71px;background:#fcf680;"></div><div style="position:absolute;left:451.60px;top:329.97px;width:57.00px;height:17.71px;background:#a6c9f0;"></div><div style="position:absolute;left:508.60px;top:329.97px;width:92.80px;height:17.71px;background:#c8f8c8;"></div><div style="position:absolute;left:601.40px;top:329.97px;width:108.80px;height:17.71px;background:#fcf680;"></div><div style="position:absolute;left:710.20px;top:329.97px;width:57.80px;height:17.71px;background:#a6c9f0;"></div><div style="position:absolute;left:768.00px;top:329.97px;width:86.00px;height:17.71px;background:#ffffff;"></div><div style="position:absolute;left:854.00px;top:329.97px;width:99.00px;height:17.71px;background:#fcf680;"></div><div style="position:absolute;left:953.00px;top:329.97px;width:71.00px;height:17.71px;background:#a6c9f0;"></div><div style="position:absolute;left:8.50px;top:347.68px;width:23.00px;height:17.71px;background:#f1f1f1;box-shadow:inset 0 1.5px 0 #fafafa;"></div><div style="position:absolute;left:31.50px;top:347.68px;width:216.10px;height:17.71px;background:#cfcfcf;box-shadow:inset 0 1.5px 0 #f2f2f2;"></div><div style="position:absolute;left:247.60px;top:347.68px;width:97.90px;height:17.71px;background:#c8f8c8;"></div><div style="position:absolute;left:345.50px;top:347.68px;width:106.10px;height:17.71px;background:#fcf680;"></div><div style="position:absolute;left:451.60px;top:347.68px;width:57.00px;height:17.71px;background:#a6c9f0;"></div><div style="position:absolute;left:508.60px;top:347.68px;width:92.80px;height:17.71px;background:#c8f8c8;"></div><div style="position:absolute;left:601.40px;top:347.68px;width:108.80px;height:17.71px;background:#fcf680;"></div><div style="position:absolute;left:710.20px;top:347.68px;width:57.80px;height:17.71px;background:#a6c9f0;"></div><div style="position:absolute;left:768.00px;top:347.68px;width:86.00px;height:17.71px;background:#ffffff;"></div><div style="position:absolute;left:854.00px;top:347.68px;width:99.00px;height:17.71px;background:#fcf680;"></div><div style="position:absolute;left:953.00px;top:347.68px;width:71.00px;height:17.71px;background:#a6c9f0;"></div><div style="position:absolute;left:8.50px;top:365.39px;width:23.00px;height:17.71px;background:#f1f1f1;box-shadow:inset 0 1.5px 0 #fafafa;"></div><div style="position:absolute;left:31.50px;top:365.39px;width:216.10px;height:17.71px;background:#cfcfcf;box-shadow:inset 0 1.5px 0 #f2f2f2;"></div><div style="position:absolute;left:247.60px;top:365.39px;width:97.90px;height:17.71px;background:#c8f8c8;"></div><div style="position:absolute;left:345.50px;top:365.39px;width:106.10px;height:17.71px;background:#fcf680;"></div><div style="position:absolute;left:451.60px;top:365.39px;width:57.00px;height:17.71px;background:#a6c9f0;"></div><div style="position:absolute;left:508.60px;top:365.39px;width:92.80px;height:17.71px;background:#c8f8c8;"></div><div style="position:absolute;left:601.40px;top:365.39px;width:108.80px;height:17.71px;background:#fcf680;"></div><div style="position:absolute;left:710.20px;top:365.39px;width:57.80px;height:17.71px;background:#a6c9f0;"></div><div style="position:absolute;left:768.00px;top:365.39px;width:86.00px;height:17.71px;background:#ffffff;"></div><div style="position:absolute;left:854.00px;top:365.39px;width:99.00px;height:17.71px;background:#fcf680;"></div><div style="position:absolute;left:953.00px;top:365.39px;width:71.00px;height:17.71px;background:#a6c9f0;"></div><div style="position:absolute;left:8.50px;top:383.10px;width:23.00px;height:17.71px;background:#f1f1f1;box-shadow:inset 0 1.5px 0 #fafafa;"></div><div style="position:absolute;left:31.50px;top:383.10px;width:216.10px;height:17.71px;background:#cfcfcf;box-shadow:inset 0 1.5px 0 #f2f2f2;"></div><div style="position:absolute;left:247.60px;top:383.10px;width:97.90px;height:17.71px;background:#c8f8c8;"></div><div style="position:absolute;left:345.50px;top:383.10px;width:106.10px;height:17.71px;background:#fcf680;"></div><div style="position:absolute;left:451.60px;top:383.10px;width:57.00px;height:17.71px;background:#a6c9f0;"></div><div style="position:absolute;left:508.60px;top:383.10px;width:92.80px;height:17.71px;background:#c8f8c8;"></div><div style="position:absolute;left:601.40px;top:383.10px;width:108.80px;height:17.71px;background:#fcf680;"></div><div style="position:absolute;left:710.20px;top:383.10px;width:57.80px;height:17.71px;background:#a6c9f0;"></div><div style="position:absolute;left:768.00px;top:383.10px;width:86.00px;height:17.71px;background:#ffffff;"></div><div style="position:absolute;left:854.00px;top:383.10px;width:99.00px;height:17.71px;background:#fcf680;"></div><div style="position:absolute;left:953.00px;top:383.10px;width:71.00px;height:17.71px;background:#a6c9f0;"></div><div style="position:absolute;left:8.50px;top:400.81px;width:23.00px;height:17.71px;background:#f1f1f1;box-shadow:inset 0 1.5px 0 #fafafa;"></div><div style="position:absolute;left:31.50px;top:400.81px;width:216.10px;height:17.71px;background:#cfcfcf;box-shadow:inset 0 1.5px 0 #f2f2f2;"></div><div style="position:absolute;left:247.60px;top:400.81px;width:97.90px;height:17.71px;background:#c8f8c8;"></div><div style="position:absolute;left:345.50px;top:400.81px;width:106.10px;height:17.71px;background:#fcf680;"></div><div style="position:absolute;left:451.60px;top:400.81px;width:57.00px;height:17.71px;background:#a6c9f0;"></div><div style="position:absolute;left:508.60px;top:400.81px;width:92.80px;height:17.71px;background:#c8f8c8;"></div><div style="position:absolute;left:601.40px;top:400.81px;width:108.80px;height:17.71px;background:#fcf680;"></div><div style="position:absolute;left:710.20px;top:400.81px;width:57.80px;height:17.71px;background:#a6c9f0;"></div><div style="position:absolute;left:768.00px;top:400.81px;width:86.00px;height:17.71px;background:#ffffff;"></div><div style="position:absolute;left:854.00px;top:400.81px;width:99.00px;height:17.71px;background:#fcf680;"></div><div style="position:absolute;left:953.00px;top:400.81px;width:71.00px;height:17.71px;background:#a6c9f0;"></div><div style="position:absolute;left:8.50px;top:418.52px;width:23.00px;height:17.71px;background:#f1f1f1;box-shadow:inset 0 1.5px 0 #fafafa;"></div><div style="position:absolute;left:31.50px;top:418.52px;width:216.10px;height:17.71px;background:#cfcfcf;box-shadow:inset 0 1.5px 0 #f2f2f2;"></div><div style="position:absolute;left:247.60px;top:418.52px;width:97.90px;height:17.71px;background:#c8f8c8;"></div><div style="position:absolute;left:345.50px;top:418.52px;width:106.10px;height:17.71px;background:#fcf680;"></div><div style="position:absolute;left:451.60px;top:418.52px;width:57.00px;height:17.71px;background:#a6c9f0;"></div><div style="position:absolute;left:508.60px;top:418.52px;width:92.80px;height:17.71px;background:#c8f8c8;"></div><div style="position:absolute;left:601.40px;top:418.52px;width:108.80px;height:17.71px;background:#fcf680;"></div><div style="position:absolute;left:710.20px;top:418.52px;width:57.80px;height:17.71px;background:#a6c9f0;"></div><div style="position:absolute;left:768.00px;top:418.52px;width:86.00px;height:17.71px;background:#ffffff;"></div><div style="position:absolute;left:854.00px;top:418.52px;width:99.00px;height:17.71px;background:#fcf680;"></div><div style="position:absolute;left:953.00px;top:418.52px;width:71.00px;height:17.71px;background:#a6c9f0;"></div><div style="position:absolute;left:8.50px;top:436.23px;width:23.00px;height:17.71px;background:#f1f1f1;box-shadow:inset 0 1.5px 0 #fafafa;"></div><div style="position:absolute;left:31.50px;top:436.23px;width:216.10px;height:17.71px;background:#cfcfcf;box-shadow:inset 0 1.5px 0 #f2f2f2;"></div><div style="position:absolute;left:247.60px;top:436.23px;width:97.90px;height:17.71px;background:#c8f8c8;"></div><div style="position:absolute;left:345.50px;top:436.23px;width:106.10px;height:17.71px;background:#fcf680;"></div><div style="position:absolute;left:451.60px;top:436.23px;width:57.00px;height:17.71px;background:#a6c9f0;"></div><div style="position:absolute;left:508.60px;top:436.23px;width:92.80px;height:17.71px;background:#c8f8c8;"></div><div style="position:absolute;left:601.40px;top:436.23px;width:108.80px;height:17.71px;background:#fcf680;"></div><div style="position:absolute;left:710.20px;top:436.23px;width:57.80px;height:17.71px;background:#a6c9f0;"></div><div style="position:absolute;left:768.00px;top:436.23px;width:86.00px;height:17.71px;background:#ffffff;"></div><div style="position:absolute;left:854.00px;top:436.23px;width:99.00px;height:17.71px;background:#fcf680;"></div><div style="position:absolute;left:953.00px;top:436.23px;width:71.00px;height:17.71px;background:#a6c9f0;"></div><div style="position:absolute;left:8.50px;top:453.94px;width:23.00px;height:17.71px;background:#f1f1f1;box-shadow:inset 0 1.5px 0 #fafafa;"></div><div style="position:absolute;left:31.50px;top:453.94px;width:216.10px;height:17.71px;background:#cfcfcf;box-shadow:inset 0 1.5px 0 #f2f2f2;"></div><div style="position:absolute;left:247.60px;top:453.94px;width:97.90px;height:17.71px;background:#c8f8c8;"></div><div style="position:absolute;left:345.50px;top:453.94px;width:106.10px;height:17.71px;background:#fcf680;"></div><div style="position:absolute;left:451.60px;top:453.94px;width:57.00px;height:17.71px;background:#a6c9f0;"></div><div style="position:absolute;left:508.60px;top:453.94px;width:92.80px;height:17.71px;background:#c8f8c8;"></div><div style="position:absolute;left:601.40px;top:453.94px;width:108.80px;height:17.71px;background:#fcf680;"></div><div style="position:absolute;left:710.20px;top:453.94px;width:57.80px;height:17.71px;background:#a6c9f0;"></div><div style="position:absolute;left:768.00px;top:453.94px;width:86.00px;height:17.71px;background:#ffffff;"></div><div style="position:absolute;left:854.00px;top:453.94px;width:99.00px;height:17.71px;background:#fcf680;"></div><div style="position:absolute;left:953.00px;top:453.94px;width:71.00px;height:17.71px;background:#a6c9f0;"></div><div style="position:absolute;left:8.50px;top:471.65px;width:23.00px;height:17.71px;background:#f1f1f1;box-shadow:inset 0 1.5px 0 #fafafa;"></div><div style="position:absolute;left:31.50px;top:471.65px;width:216.10px;height:17.71px;background:#cfcfcf;box-shadow:inset 0 1.5px 0 #f2f2f2;"></div><div style="position:absolute;left:247.60px;top:471.65px;width:97.90px;height:17.71px;background:#c8f8c8;"></div><div style="position:absolute;left:345.50px;top:471.65px;width:106.10px;height:17.71px;background:#fcf680;"></div><div style="position:absolute;left:451.60px;top:471.65px;width:57.00px;height:17.71px;background:#a6c9f0;"></div><div style="position:absolute;left:508.60px;top:471.65px;width:92.80px;height:17.71px;background:#c8f8c8;"></div><div style="position:absolute;left:601.40px;top:471.65px;width:108.80px;height:17.71px;background:#fcf680;"></div><div style="position:absolute;left:710.20px;top:471.65px;width:57.80px;height:17.71px;background:#a6c9f0;"></div><div style="position:absolute;left:768.00px;top:471.65px;width:86.00px;height:17.71px;background:#ffffff;"></div><div style="position:absolute;left:854.00px;top:471.65px;width:99.00px;height:17.71px;background:#fcf680;"></div><div style="position:absolute;left:953.00px;top:471.65px;width:71.00px;height:17.71px;background:#a6c9f0;"></div><svg style="position:absolute;left:0;top:0" width="1024" height="490"><defs><pattern id="dh" width="2" height="2" patternUnits="userSpaceOnUse"><rect width="1" height="2" fill="#5a5a5a"/></pattern><pattern id="dv" width="2" height="2" patternUnits="userSpaceOnUse"><rect width="2" height="1" fill="#5a5a5a"/></pattern></defs><rect x="247.60" y="223.11" width="776.40" height="1.2" fill="url(#dh)" opacity="0.8"/><rect x="247.60" y="240.82" width="776.40" height="1.2" fill="url(#dh)" opacity="0.8"/><rect x="247.60" y="258.53" width="776.40" height="1.2" fill="url(#dh)" opacity="0.8"/><rect x="247.60" y="276.24" width="776.40" height="1.2" fill="url(#dh)" opacity="0.8"/><rect x="247.60" y="293.95" width="776.40" height="1.2" fill="url(#dh)" opacity="0.8"/><rect x="247.60" y="311.66" width="776.40" height="1.2" fill="url(#dh)" opacity="0.8"/><rect x="247.60" y="329.37" width="776.40" height="1.2" fill="url(#dh)" opacity="0.8"/><rect x="247.60" y="347.08" width="776.40" height="1.2" fill="url(#dh)" opacity="0.8"/><rect x="247.60" y="364.79" width="776.40" height="1.2" fill="url(#dh)" opacity="0.8"/><rect x="247.60" y="382.50" width="776.40" height="1.2" fill="url(#dh)" opacity="0.8"/><rect x="247.60" y="400.21" width="776.40" height="1.2" fill="url(#dh)" opacity="0.8"/><rect x="247.60" y="417.92" width="776.40" height="1.2" fill="url(#dh)" opacity="0.8"/><rect x="247.60" y="435.63" width="776.40" height="1.2" fill="url(#dh)" opacity="0.8"/><rect x="247.60" y="453.34" width="776.40" height="1.2" fill="url(#dh)" opacity="0.8"/><rect x="247.60" y="471.05" width="776.40" height="1.2" fill="url(#dh)" opacity="0.8"/><rect x="247.60" y="488.76" width="776.40" height="1.2" fill="url(#dh)" opacity="0.8"/><rect x="344.90" y="206.00" width="1.2" height="284.00" fill="url(#dv)" opacity="0.6"/><rect x="451.00" y="206.00" width="1.2" height="284.00" fill="url(#dv)" opacity="0.6"/><rect x="508.00" y="206.00" width="1.2" height="284.00" fill="url(#dv)" opacity="0.6"/><rect x="600.80" y="206.00" width="1.2" height="284.00" fill="url(#dv)" opacity="0.6"/><rect x="709.60" y="206.00" width="1.2" height="284.00" fill="url(#dv)" opacity="0.6"/><rect x="767.40" y="206.00" width="1.2" height="284.00" fill="url(#dv)" opacity="0.6"/><rect x="853.40" y="206.00" width="1.2" height="284.00" fill="url(#dv)" opacity="0.6"/><rect x="952.40" y="206.00" width="1.2" height="284.00" fill="url(#dv)" opacity="0.6"/><rect x="8.50" y="222.91" width="239.10" height="1.6" fill="#383838"/><rect x="8.50" y="240.62" width="239.10" height="1.6" fill="#383838"/><rect x="8.50" y="258.33" width="239.10" height="1.6" fill="#383838"/><rect x="8.50" y="276.04" width="239.10" height="1.6" fill="#383838"/><rect x="8.50" y="293.75" width="239.10" height="1.6" fill="#383838"/><rect x="8.50" y="311.46" width="239.10" height="1.6" fill="#383838"/><rect x="8.50" y="329.17" width="239.10" height="1.6" fill="#383838"/><rect x="8.50" y="346.88" width="239.10" height="1.6" fill="#383838"/><rect x="8.50" y="364.59" width="239.10" height="1.6" fill="#383838"/><rect x="8.50" y="382.30" width="239.10" height="1.6" fill="#383838"/><rect x="8.50" y="400.01" width="239.10" height="1.6" fill="#383838"/><rect x="8.50" y="417.72" width="239.10" height="1.6" fill="#383838"/><rect x="8.50" y="435.43" width="239.10" height="1.6" fill="#383838"/><rect x="8.50" y="453.14" width="239.10" height="1.6" fill="#383838"/><rect x="8.50" y="470.85" width="239.10" height="1.6" fill="#383838"/><rect x="8.50" y="488.56" width="239.10" height="1.6" fill="#383838"/><rect x="8.50" y="205.00" width="1015.50" height="1.9" fill="#3e4248"/><rect x="7.75" y="184.60" width="1.5" height="305.40" fill="#6a6a6a"/><rect x="30.75" y="184.60" width="1.5" height="305.40" fill="#383838"/><rect x="246.85" y="184.60" width="1.5" height="305.40" fill="#383838"/><rect x="344.75" y="184.60" width="1.5" height="21.40" fill="#383838"/><rect x="450.85" y="184.60" width="1.5" height="21.40" fill="#383838"/><rect x="507.85" y="184.60" width="1.5" height="21.40" fill="#383838"/><rect x="600.65" y="184.60" width="1.5" height="21.40" fill="#383838"/><rect x="709.45" y="184.60" width="1.5" height="21.40" fill="#383838"/><rect x="767.25" y="184.60" width="1.5" height="21.40" fill="#383838"/><rect x="853.25" y="184.60" width="1.5" height="21.40" fill="#383838"/><rect x="952.25" y="184.60" width="1.5" height="21.40" fill="#383838"/></svg><div style="position:absolute;top:208.20px;font:normal 13px/13px 'Liberation Sans', sans-serif;color:#1a1a2a;white-space:nowrap;-webkit-text-stroke:0.12px #1a1a2a;left:13.98px;transform-origin:0 0;">1</div><div style="position:absolute;top:208.20px;font:normal 13px/13px 'Liberation Sans', sans-serif;color:#2a2a2a;white-space:nowrap;-webkit-text-stroke:0.12px #2a2a2a;left:35.88px;transform-origin:0 0;transform:scaleX(0.9250);">EMEKLILIK YATIRIM FONLARI</div><div style="position:absolute;top:208.20px;font:normal 13px/13px 'Liberation Sans', sans-serif;color:#1a1a1a;white-space:nowrap;-webkit-text-stroke:0.12px #1a1a1a;right:684.98px;transform-origin:100% 0;">6.781.815</div><div style="position:absolute;top:208.20px;font:normal 13px/13px 'Liberation Sans', sans-serif;color:#1a1a1a;white-space:nowrap;-webkit-text-stroke:0.12px #1a1a1a;right:578.88px;transform-origin:100% 0;">626.639.716</div><div style="position:absolute;top:208.20px;font:normal 13px/13px 'Liberation Sans', sans-serif;color:#1a1a1a;white-space:nowrap;-webkit-text-stroke:0.12px #1a1a1a;right:521.88px;transform-origin:100% 0;">02,45</div><div style="position:absolute;top:208.20px;font:normal 13px/13px 'Liberation Sans', sans-serif;color:#1a1a1a;white-space:nowrap;-webkit-text-stroke:0.12px #1a1a1a;right:429.08px;transform-origin:100% 0;">2.391.293</div><div style="position:absolute;top:208.20px;font:normal 13px/13px 'Liberation Sans', sans-serif;color:#1a1a1a;white-space:nowrap;-webkit-text-stroke:0.12px #1a1a1a;right:320.28px;transform-origin:100% 0;">220.716.344</div><div style="position:absolute;top:208.20px;font:normal 13px/13px 'Liberation Sans', sans-serif;color:#1a1a1a;white-space:nowrap;-webkit-text-stroke:0.12px #1a1a1a;right:262.48px;transform-origin:100% 0;">00,86</div><div style="position:absolute;top:208.20px;font:normal 13px/13px 'Liberation Sans', sans-serif;color:#ff2020;white-space:nowrap;-webkit-text-stroke:0.12px #ff2020;right:176.48px;transform-origin:100% 0;">-4.390.522</div><div style="position:absolute;top:208.20px;font:normal 13px/13px 'Liberation Sans', sans-serif;color:#1a1a1a;white-space:nowrap;-webkit-text-stroke:0.12px #1a1a1a;right:77.48px;transform-origin:100% 0;">-405.923.372</div><div style="position:absolute;top:208.20px;font:normal 13px/13px 'Liberation Sans', sans-serif;color:#1a1a1a;white-space:nowrap;-webkit-text-stroke:0.12px #1a1a1a;right:6.48px;transform-origin:100% 0;">-64,78</div><div style="position:absolute;top:225.91px;font:normal 13px/13px 'Liberation Sans', sans-serif;color:#1a1a2a;white-space:nowrap;-webkit-text-stroke:0.12px #1a1a2a;left:13.98px;transform-origin:0 0;">2</div><div style="position:absolute;top:225.91px;font:normal 13px/13px 'Liberation Sans', sans-serif;color:#2a2a2a;white-space:nowrap;-webkit-text-stroke:0.12px #2a2a2a;left:35.88px;transform-origin:0 0;transform:scaleX(0.9539);">YATIRIM FONLARI</div><div style="position:absolute;top:225.91px;font:normal 13px/13px 'Liberation Sans', sans-serif;color:#1a1a1a;white-space:nowrap;-webkit-text-stroke:0.12px #1a1a1a;right:684.98px;transform-origin:100% 0;">13.985.724</div><div style="position:absolute;top:225.91px;font:normal 13px/13px 'Liberation Sans', sans-serif;color:#1a1a1a;white-space:nowrap;-webkit-text-stroke:0.12px #1a1a1a;right:578.88px;transform-origin:100% 0;">1.292.280.919</div><div style="position:absolute;top:225.91px;font:normal 13px/13px 'Liberation Sans', sans-serif;color:#1a1a1a;white-space:nowrap;-webkit-text-stroke:0.12px #1a1a1a;right:521.88px;transform-origin:100% 0;">05,05</div><div style="position:absolute;top:225.91px;font:normal 13px/13px 'Liberation Sans', sans-serif;color:#1a1a1a;white-space:nowrap;-webkit-text-stroke:0.12px #1a1a1a;right:429.08px;transform-origin:100% 0;">11.301.488</div><div style="position:absolute;top:225.91px;font:normal 13px/13px 'Liberation Sans', sans-serif;color:#1a1a1a;white-space:nowrap;-webkit-text-stroke:0.12px #1a1a1a;right:320.28px;transform-origin:100% 0;">1.043.127.342</div><div style="position:absolute;top:225.91px;font:normal 13px/13px 'Liberation Sans', sans-serif;color:#1a1a1a;white-space:nowrap;-webkit-text-stroke:0.12px #1a1a1a;right:262.48px;transform-origin:100% 0;">04,08</div><div style="position:absolute;top:225.91px;font:normal 13px/13px 'Liberation Sans', sans-serif;color:#ff2020;white-space:nowrap;-webkit-text-stroke:0.12px #ff2020;right:176.48px;transform-origin:100% 0;">-2.684.236</div><div style="position:absolute;top:225.91px;font:normal 13px/13px 'Liberation Sans', sans-serif;color:#1a1a1a;white-space:nowrap;-webkit-text-stroke:0.12px #1a1a1a;right:77.48px;transform-origin:100% 0;">-249.153.577</div><div style="position:absolute;top:225.91px;font:normal 13px/13px 'Liberation Sans', sans-serif;color:#1a1a1a;white-space:nowrap;-webkit-text-stroke:0.12px #1a1a1a;right:6.48px;transform-origin:100% 0;">-19,28</div><div style="position:absolute;top:243.62px;font:normal 13px/13px 'Liberation Sans', sans-serif;color:#1a1a2a;white-space:nowrap;-webkit-text-stroke:0.12px #1a1a2a;left:13.98px;transform-origin:0 0;">3</div><div style="position:absolute;top:243.62px;font:normal 13px/13px 'Liberation Sans', sans-serif;color:#2a2a2a;white-space:nowrap;-webkit-text-stroke:0.12px #2a2a2a;left:35.88px;transform-origin:0 0;transform:scaleX(0.8599);">UNLU MENKUL DEGERLER</div><div style="position:absolute;top:243.62px;font:normal 13px/13px 'Liberation Sans', sans-serif;color:#1a1a1a;white-space:nowrap;-webkit-text-stroke:0.12px #1a1a1a;right:684.98px;transform-origin:100% 0;">666.756</div><div style="position:absolute;top:243.62px;font:normal 13px/13px 'Liberation Sans', sans-serif;color:#1a1a1a;white-space:nowrap;-webkit-text-stroke:0.12px #1a1a1a;right:578.88px;transform-origin:100% 0;">61.608.255</div><div style="position:absolute;top:243.62px;font:normal 13px/13px 'Liberation Sans', sans-serif;color:#1a1a1a;white-space:nowrap;-webkit-text-stroke:0.12px #1a1a1a;right:521.88px;transform-origin:100% 0;">00,24</div><div style="position:absolute;top:243.62px;font:normal 13px/13px 'Liberation Sans', sans-serif;color:#1a1a1a;white-space:nowrap;-webkit-text-stroke:0.12px #1a1a1a;right:429.08px;transform-origin:100% 0;">381.912</div><div style="position:absolute;top:243.62px;font:normal 13px/13px 'Liberation Sans', sans-serif;color:#1a1a1a;white-space:nowrap;-webkit-text-stroke:0.12px #1a1a1a;right:320.28px;transform-origin:100% 0;">35.250.478</div><div style="position:absolute;top:243.62px;font:normal 13px/13px 'Liberation Sans', sans-serif;color:#1a1a1a;white-space:nowrap;-webkit-text-stroke:0.12px #1a1a1a;right:262.48px;transform-origin:100% 0;">00,14</div><div style="position:absolute;top:243.62px;font:normal 13px/13px 'Liberation Sans', sans-serif;color:#ff2020;white-space:nowrap;-webkit-text-stroke:0.12px #ff2020;right:176.48px;transform-origin:100% 0;">-284.844</div><div style="position:absolute;top:243.62px;font:normal 13px/13px 'Liberation Sans', sans-serif;color:#1a1a1a;white-space:nowrap;-webkit-text-stroke:0.12px #1a1a1a;right:77.48px;transform-origin:100% 0;">-26.357.778</div><div style="position:absolute;top:243.62px;font:normal 13px/13px 'Liberation Sans', sans-serif;color:#1a1a1a;white-space:nowrap;-webkit-text-stroke:0.12px #1a1a1a;right:6.48px;transform-origin:100% 0;">-42,78</div><div style="position:absolute;top:261.33px;font:normal 13px/13px 'Liberation Sans', sans-serif;color:#1a1a2a;white-space:nowrap;-webkit-text-stroke:0.12px #1a1a2a;left:13.98px;transform-origin:0 0;">4</div><div style="position:absolute;top:261.33px;font:normal 13px/13px 'Liberation Sans', sans-serif;color:#2a2a2a;white-space:nowrap;-webkit-text-stroke:0.12px #2a2a2a;left:35.88px;transform-origin:0 0;">ZIRAAT YAT.</div><div style="position:absolute;top:261.33px;font:normal 13px/13px 'Liberation Sans', sans-serif;color:#1a1a1a;white-space:nowrap;-webkit-text-stroke:0.12px #1a1a1a;right:684.98px;transform-origin:100% 0;">16.081.047</div><div style="position:absolute;top:261.33px;font:normal 13px/13px 'Liberation Sans', sans-serif;color:#1a1a1a;white-space:nowrap;-webkit-text-stroke:0.12px #1a1a1a;right:578.88px;transform-origin:100% 0;">1.485.888.767</div><div style="position:absolute;top:261.33px;font:normal 13px/13px 'Liberation Sans', sans-serif;color:#1a1a1a;white-space:nowrap;-webkit-text-stroke:0.12px #1a1a1a;right:521.88px;transform-origin:100% 0;">05,81</div><div style="position:absolute;top:261.33px;font:normal 13px/13px 'Liberation Sans', sans-serif;color:#1a1a1a;white-space:nowrap;-webkit-text-stroke:0.12px #1a1a1a;right:429.08px;transform-origin:100% 0;">15.910.150</div><div style="position:absolute;top:261.33px;font:normal 13px/13px 'Liberation Sans', sans-serif;color:#1a1a1a;white-space:nowrap;-webkit-text-stroke:0.12px #1a1a1a;right:320.28px;transform-origin:100% 0;">1.468.506.845</div><div style="position:absolute;top:261.33px;font:normal 13px/13px 'Liberation Sans', sans-serif;color:#1a1a1a;white-space:nowrap;-webkit-text-stroke:0.12px #1a1a1a;right:262.48px;transform-origin:100% 0;">05,75</div><div style="position:absolute;top:261.33px;font:normal 13px/13px 'Liberation Sans', sans-serif;color:#ff2020;white-space:nowrap;-webkit-text-stroke:0.12px #ff2020;right:176.48px;transform-origin:100% 0;">-170.897</div><div style="position:absolute;top:261.33px;font:normal 13px/13px 'Liberation Sans', sans-serif;color:#1a1a1a;white-space:nowrap;-webkit-text-stroke:0.12px #1a1a1a;right:77.48px;transform-origin:100% 0;">-17.381.922</div><div style="position:absolute;top:261.33px;font:normal 13px/13px 'Liberation Sans', sans-serif;color:#1a1a1a;white-space:nowrap;-webkit-text-stroke:0.12px #1a1a1a;right:6.48px;transform-origin:100% 0;">-01,17</div><div style="position:absolute;top:279.04px;font:normal 13px/13px 'Liberation Sans', sans-serif;color:#1a1a2a;white-space:nowrap;-webkit-text-stroke:0.12px #1a1a2a;left:13.98px;transform-origin:0 0;">5</div><div style="position:absolute;top:279.04px;font:normal 13px/13px 'Liberation Sans', sans-serif;color:#2a2a2a;white-space:nowrap;-webkit-text-stroke:0.12px #2a2a2a;left:35.88px;transform-origin:0 0;transform:scaleX(0.9081);">TOPLAM FARK</div><div style="position:absolute;top:279.04px;font:normal 13px/13px 'Liberation Sans', sans-serif;color:#1a1a1a;white-space:nowrap;-webkit-text-stroke:0.12px #1a1a1a;right:684.98px;transform-origin:100% 0;">303.503</div><div style="position:absolute;top:279.04px;font:normal 13px/13px 'Liberation Sans', sans-serif;color:#1a1a1a;white-space:nowrap;-webkit-text-stroke:0.12px #1a1a1a;right:578.88px;transform-origin:100% 0;">28.043.680</div><div style="position:absolute;top:279.04px;font:normal 13px/13px 'Liberation Sans', sans-serif;color:#1a1a1a;white-space:nowrap;-webkit-text-stroke:0.12px #1a1a1a;right:521.88px;transform-origin:100% 0;">00,11</div><div style="position:absolute;top:279.04px;font:normal 13px/13px 'Liberation Sans', sans-serif;color:#1a1a1a;white-space:nowrap;-webkit-text-stroke:0.12px #1a1a1a;right:429.08px;transform-origin:100% 0;">186.508</div><div style="position:absolute;top:279.04px;font:normal 13px/13px 'Liberation Sans', sans-serif;color:#1a1a1a;white-space:nowrap;-webkit-text-stroke:0.12px #1a1a1a;right:320.28px;transform-origin:100% 0;">17.214.690</div><div style="position:absolute;top:279.04px;font:normal 13px/13px 'Liberation Sans', sans-serif;color:#1a1a1a;white-space:nowrap;-webkit-text-stroke:0.12px #1a1a1a;right:262.48px;transform-origin:100% 0;">00,07</div><div style="position:absolute;top:279.04px;font:normal 13px/13px 'Liberation Sans', sans-serif;color:#ff2020;white-space:nowrap;-webkit-text-stroke:0.12px #ff2020;right:176.48px;transform-origin:100% 0;">-116.995</div><div style="position:absolute;top:279.04px;font:normal 13px/13px 'Liberation Sans', sans-serif;color:#1a1a1a;white-space:nowrap;-webkit-text-stroke:0.12px #1a1a1a;right:77.48px;transform-origin:100% 0;">-10.828.989</div><div style="position:absolute;top:279.04px;font:normal 13px/13px 'Liberation Sans', sans-serif;color:#1a1a1a;white-space:nowrap;-webkit-text-stroke:0.12px #1a1a1a;right:6.48px;transform-origin:100% 0;">-38,61</div><div style="position:absolute;top:296.75px;font:normal 13px/13px 'Liberation Sans', sans-serif;color:#1a1a2a;white-space:nowrap;-webkit-text-stroke:0.12px #1a1a2a;left:13.98px;transform-origin:0 0;">6</div><div style="position:absolute;top:296.75px;font:normal 13px/13px 'Liberation Sans', sans-serif;color:#2a2a2a;white-space:nowrap;-webkit-text-stroke:0.12px #2a2a2a;left:35.88px;transform-origin:0 0;transform:scaleX(0.8735);">MARBAS MENKUL</div><div style="position:absolute;top:296.75px;font:normal 13px/13px 'Liberation Sans', sans-serif;color:#1a1a1a;white-space:nowrap;-webkit-text-stroke:0.12px #1a1a1a;right:684.98px;transform-origin:100% 0;">607.072</div><div style="position:absolute;top:296.75px;font:normal 13px/13px 'Liberation Sans', sans-serif;color:#1a1a1a;white-space:nowrap;-webkit-text-stroke:0.12px #1a1a1a;right:578.88px;transform-origin:100% 0;">56.093.454</div><div style="position:absolute;top:296.75px;font:normal 13px/13px 'Liberation Sans', sans-serif;color:#1a1a1a;white-space:nowrap;-webkit-text-stroke:0.12px #1a1a1a;right:521.88px;transform-origin:100% 0;">00,22</div><div style="position:absolute;top:296.75px;font:normal 13px/13px 'Liberation Sans', sans-serif;color:#1a1a1a;white-space:nowrap;-webkit-text-stroke:0.12px #1a1a1a;right:429.08px;transform-origin:100% 0;">510.692</div><div style="position:absolute;top:296.75px;font:normal 13px/13px 'Liberation Sans', sans-serif;color:#1a1a1a;white-space:nowrap;-webkit-text-stroke:0.12px #1a1a1a;right:320.28px;transform-origin:100% 0;">47.136.872</div><div style="position:absolute;top:296.75px;font:normal 13px/13px 'Liberation Sans', sans-serif;color:#1a1a1a;white-space:nowrap;-webkit-text-stroke:0.12px #1a1a1a;right:262.48px;transform-origin:100% 0;">00,18</div><div style="position:absolute;top:296.75px;font:normal 13px/13px 'Liberation Sans', sans-serif;color:#ff2020;white-space:nowrap;-webkit-text-stroke:0.12px #ff2020;right:176.48px;transform-origin:100% 0;">-96.380</div><div style="position:absolute;top:296.75px;font:normal 13px/13px 'Liberation Sans', sans-serif;color:#1a1a1a;white-space:nowrap;-webkit-text-stroke:0.12px #1a1a1a;right:77.48px;transform-origin:100% 0;">-8.956.582</div><div style="position:absolute;top:296.75px;font:normal 13px/13px 'Liberation Sans', sans-serif;color:#1a1a1a;white-space:nowrap;-webkit-text-stroke:0.12px #1a1a1a;right:6.48px;transform-origin:100% 0;">-15,97</div><div style="position:absolute;top:314.46px;font:normal 13px/13px 'Liberation Sans', sans-serif;color:#1a1a2a;white-space:nowrap;-webkit-text-stroke:0.12px #1a1a2a;left:13.98px;transform-origin:0 0;">7</div><div style="position:absolute;top:314.46px;font:normal 13px/13px 'Liberation Sans', sans-serif;color:#2a2a2a;white-space:nowrap;-webkit-text-stroke:0.12px #2a2a2a;left:35.88px;transform-origin:0 0;transform:scaleX(0.8618);">GLOBAL MENKUL</div><div style="position:absolute;top:314.46px;font:normal 13px/13px 'Liberation Sans', sans-serif;color:#1a1a1a;white-space:nowrap;-webkit-text-stroke:0.12px #1a1a1a;right:684.98px;transform-origin:100% 0;">968.010</div><div style="position:absolute;top:314.46px;font:normal 13px/13px 'Liberation Sans', sans-serif;color:#1a1a1a;white-space:nowrap;-webkit-text-stroke:0.12px #1a1a1a;right:578.88px;transform-origin:100% 0;">89.444.125</div><div style="position:absolute;top:314.46px;font:normal 13px/13px 'Liberation Sans', sans-serif;color:#1a1a1a;white-space:nowrap;-webkit-text-stroke:0.12px #1a1a1a;right:521.88px;transform-origin:100% 0;">00,35</div><div style="position:absolute;top:314.46px;font:normal 13px/13px 'Liberation Sans', sans-serif;color:#1a1a1a;white-space:nowrap;-webkit-text-stroke:0.12px #1a1a1a;right:429.08px;transform-origin:100% 0;">881.469</div><div style="position:absolute;top:314.46px;font:normal 13px/13px 'Liberation Sans', sans-serif;color:#1a1a1a;white-space:nowrap;-webkit-text-stroke:0.12px #1a1a1a;right:320.28px;transform-origin:100% 0;">81.359.589</div><div style="position:absolute;top:314.46px;font:normal 13px/13px 'Liberation Sans', sans-serif;color:#1a1a1a;white-space:nowrap;-webkit-text-stroke:0.12px #1a1a1a;right:262.48px;transform-origin:100% 0;">00,32</div><div style="position:absolute;top:314.46px;font:normal 13px/13px 'Liberation Sans', sans-serif;color:#ff2020;white-space:nowrap;-webkit-text-stroke:0.12px #ff2020;right:176.48px;transform-origin:100% 0;">-86.541</div><div style="position:absolute;top:314.46px;font:normal 13px/13px 'Liberation Sans', sans-serif;color:#1a1a1a;white-space:nowrap;-webkit-text-stroke:0.12px #1a1a1a;right:77.48px;transform-origin:100% 0;">-8.084.537</div><div style="position:absolute;top:314.46px;font:normal 13px/13px 'Liberation Sans', sans-serif;color:#1a1a1a;white-space:nowrap;-webkit-text-stroke:0.12px #1a1a1a;right:6.48px;transform-origin:100% 0;">-09,04</div><div style="position:absolute;top:332.17px;font:normal 13px/13px 'Liberation Sans', sans-serif;color:#1a1a2a;white-space:nowrap;-webkit-text-stroke:0.12px #1a1a2a;left:13.98px;transform-origin:0 0;">8</div><div style="position:absolute;top:332.17px;font:normal 13px/13px 'Liberation Sans', sans-serif;color:#2a2a2a;white-space:nowrap;-webkit-text-stroke:0.12px #2a2a2a;left:35.88px;transform-origin:0 0;transform:scaleX(0.9202);">STRATEJI MEN.</div><div style="position:absolute;top:332.17px;font:normal 13px/13px 'Liberation Sans', sans-serif;color:#1a1a1a;white-space:nowrap;-webkit-text-stroke:0.12px #1a1a1a;right:684.98px;transform-origin:100% 0;">102.811</div><div style="position:absolute;top:332.17px;font:normal 13px/13px 'Liberation Sans', sans-serif;color:#1a1a1a;white-space:nowrap;-webkit-text-stroke:0.12px #1a1a1a;right:578.88px;transform-origin:100% 0;">9.499.737</div><div style="position:absolute;top:332.17px;font:normal 13px/13px 'Liberation Sans', sans-serif;color:#1a1a1a;white-space:nowrap;-webkit-text-stroke:0.12px #1a1a1a;right:521.88px;transform-origin:100% 0;">00,04</div><div style="position:absolute;top:332.17px;font:normal 13px/13px 'Liberation Sans', sans-serif;color:#1a1a1a;white-space:nowrap;-webkit-text-stroke:0.12px #1a1a1a;right:429.08px;transform-origin:100% 0;">16.824</div><div style="position:absolute;top:332.17px;font:normal 13px/13px 'Liberation Sans', sans-serif;color:#1a1a1a;white-space:nowrap;-webkit-text-stroke:0.12px #1a1a1a;right:320.28px;transform-origin:100% 0;">1.552.855</div><div style="position:absolute;top:332.17px;font:normal 13px/13px 'Liberation Sans', sans-serif;color:#1a1a1a;white-space:nowrap;-webkit-text-stroke:0.12px #1a1a1a;right:262.48px;transform-origin:100% 0;">00,01</div><div style="position:absolute;top:332.17px;font:normal 13px/13px 'Liberation Sans', sans-serif;color:#ff2020;white-space:nowrap;-webkit-text-stroke:0.12px #ff2020;right:176.48px;transform-origin:100% 0;">-85.987</div><div style="position:absolute;top:332.17px;font:normal 13px/13px 'Liberation Sans', sans-serif;color:#1a1a1a;white-space:nowrap;-webkit-text-stroke:0.12px #1a1a1a;right:77.48px;transform-origin:100% 0;">-7.946.881</div><div style="position:absolute;top:332.17px;font:normal 13px/13px 'Liberation Sans', sans-serif;color:#1a1a1a;white-space:nowrap;-webkit-text-stroke:0.12px #1a1a1a;right:6.48px;transform-origin:100% 0;">-83,65</div><div style="position:absolute;top:349.88px;font:normal 13px/13px 'Liberation Sans', sans-serif;color:#1a1a2a;white-space:nowrap;-webkit-text-stroke:0.12px #1a1a2a;left:13.98px;transform-origin:0 0;">9</div><div style="position:absolute;top:349.88px;font:normal 13px/13px 'Liberation Sans', sans-serif;color:#2a2a2a;white-space:nowrap;-webkit-text-stroke:0.12px #2a2a2a;left:35.88px;transform-origin:0 0;transform:scaleX(0.8815);">NCM INVESTMENT</div><div style="position:absolute;top:349.88px;font:normal 13px/13px 'Liberation Sans', sans-serif;color:#1a1a1a;white-space:nowrap;-webkit-text-stroke:0.12px #1a1a1a;right:684.98px;transform-origin:100% 0;">48.047</div><div style="position:absolute;top:349.88px;font:normal 13px/13px 'Liberation Sans', sans-serif;color:#1a1a1a;white-space:nowrap;-webkit-text-stroke:0.12px #1a1a1a;right:578.88px;transform-origin:100% 0;">4.439.543</div><div style="position:absolute;top:349.88px;font:normal 13px/13px 'Liberation Sans', sans-serif;color:#1a1a1a;white-space:nowrap;-webkit-text-stroke:0.12px #1a1a1a;right:521.88px;transform-origin:100% 0;">00,02</div><div style="position:absolute;top:349.88px;font:normal 13px/13px 'Liberation Sans', sans-serif;color:#1a1a1a;white-space:nowrap;-webkit-text-stroke:0.12px #1a1a1a;right:429.08px;transform-origin:100% 0;">33.674</div><div style="position:absolute;top:349.88px;font:normal 13px/13px 'Liberation Sans', sans-serif;color:#1a1a1a;white-space:nowrap;-webkit-text-stroke:0.12px #1a1a1a;right:320.28px;transform-origin:100% 0;">3.108.110</div><div style="position:absolute;top:349.88px;font:normal 13px/13px 'Liberation Sans', sans-serif;color:#1a1a1a;white-space:nowrap;-webkit-text-stroke:0.12px #1a1a1a;right:262.48px;transform-origin:100% 0;">00,01</div><div style="position:absolute;top:349.88px;font:normal 13px/13px 'Liberation Sans', sans-serif;color:#ff2020;white-space:nowrap;-webkit-text-stroke:0.12px #ff2020;right:176.48px;transform-origin:100% 0;">-14.373</div><div style="position:absolute;top:349.88px;font:normal 13px/13px 'Liberation Sans', sans-serif;color:#1a1a1a;white-space:nowrap;-webkit-text-stroke:0.12px #1a1a1a;right:77.48px;transform-origin:100% 0;">-1.331.433</div><div style="position:absolute;top:349.88px;font:normal 13px/13px 'Liberation Sans', sans-serif;color:#1a1a1a;white-space:nowrap;-webkit-text-stroke:0.12px #1a1a1a;right:6.48px;transform-origin:100% 0;">-29,99</div><div style="position:absolute;top:367.59px;font:normal 13px/13px 'Liberation Sans', sans-serif;color:#1a1a2a;white-space:nowrap;-webkit-text-stroke:0.12px #1a1a2a;left:13.98px;transform-origin:0 0;">10</div><div style="position:absolute;top:367.59px;font:normal 13px/13px 'Liberation Sans', sans-serif;color:#2a2a2a;white-space:nowrap;-webkit-text-stroke:0.12px #2a2a2a;left:35.88px;transform-origin:0 0;transform:scaleX(0.8657);">ACAR MENKUL DEGERLER</div><div style="position:absolute;top:367.59px;font:normal 13px/13px 'Liberation Sans', sans-serif;color:#1a1a1a;white-space:nowrap;-webkit-text-stroke:0.12px #1a1a1a;right:684.98px;transform-origin:100% 0;">41.357</div><div style="position:absolute;top:367.59px;font:normal 13px/13px 'Liberation Sans', sans-serif;color:#1a1a1a;white-space:nowrap;-webkit-text-stroke:0.12px #1a1a1a;right:578.88px;transform-origin:100% 0;">3.821.387</div><div style="position:absolute;top:367.59px;font:normal 13px/13px 'Liberation Sans', sans-serif;color:#1a1a1a;white-space:nowrap;-webkit-text-stroke:0.12px #1a1a1a;right:521.88px;transform-origin:100% 0;">00,01</div><div style="position:absolute;top:367.59px;font:normal 13px/13px 'Liberation Sans', sans-serif;color:#1a1a1a;white-space:nowrap;-webkit-text-stroke:0.12px #1a1a1a;right:429.08px;transform-origin:100% 0;">29.314</div><div style="position:absolute;top:367.59px;font:normal 13px/13px 'Liberation Sans', sans-serif;color:#1a1a1a;white-space:nowrap;-webkit-text-stroke:0.12px #1a1a1a;right:320.28px;transform-origin:100% 0;">2.705.682</div><div style="position:absolute;top:367.59px;font:normal 13px/13px 'Liberation Sans', sans-serif;color:#1a1a1a;white-space:nowrap;-webkit-text-stroke:0.12px #1a1a1a;right:262.48px;transform-origin:100% 0;">00,01</div><div style="position:absolute;top:367.59px;font:normal 13px/13px 'Liberation Sans', sans-serif;color:#ff2020;white-space:nowrap;-webkit-text-stroke:0.12px #ff2020;right:176.48px;transform-origin:100% 0;">-12.043</div><div style="position:absolute;top:367.59px;font:normal 13px/13px 'Liberation Sans', sans-serif;color:#1a1a1a;white-space:nowrap;-webkit-text-stroke:0.12px #1a1a1a;right:77.48px;transform-origin:100% 0;">-1.115.705</div><div style="position:absolute;top:367.59px;font:normal 13px/13px 'Liberation Sans', sans-serif;color:#1a1a1a;white-space:nowrap;-webkit-text-stroke:0.12px #1a1a1a;right:6.48px;transform-origin:100% 0;">-29,20</div><div style="position:absolute;top:385.30px;font:normal 13px/13px 'Liberation Sans', sans-serif;color:#1a1a2a;white-space:nowrap;-webkit-text-stroke:0.12px #1a1a2a;left:13.98px;transform-origin:0 0;">11</div><div style="position:absolute;top:385.30px;font:normal 13px/13px 'Liberation Sans', sans-serif;color:#2a2a2a;white-space:nowrap;-webkit-text-stroke:0.12px #2a2a2a;left:35.88px;transform-origin:0 0;transform:scaleX(0.9235);">BTCTURK YATIRIM</div><div style="position:absolute;top:385.30px;font:normal 13px/13px 'Liberation Sans', sans-serif;color:#1a1a1a;white-space:nowrap;-webkit-text-stroke:0.12px #1a1a1a;right:684.98px;transform-origin:100% 0;">101.828</div><div style="position:absolute;top:385.30px;font:normal 13px/13px 'Liberation Sans', sans-serif;color:#1a1a1a;white-space:nowrap;-webkit-text-stroke:0.12px #1a1a1a;right:578.88px;transform-origin:100% 0;">9.408.907</div><div style="position:absolute;top:385.30px;font:normal 13px/13px 'Liberation Sans', sans-serif;color:#1a1a1a;white-space:nowrap;-webkit-text-stroke:0.12px #1a1a1a;right:521.88px;transform-origin:100% 0;">00,04</div><div style="position:absolute;top:385.30px;font:normal 13px/13px 'Liberation Sans', sans-serif;color:#1a1a1a;white-space:nowrap;-webkit-text-stroke:0.12px #1a1a1a;right:429.08px;transform-origin:100% 0;">91.926</div><div style="position:absolute;top:385.30px;font:normal 13px/13px 'Liberation Sans', sans-serif;color:#1a1a1a;white-space:nowrap;-webkit-text-stroke:0.12px #1a1a1a;right:320.28px;transform-origin:100% 0;">8.484.770</div><div style="position:absolute;top:385.30px;font:normal 13px/13px 'Liberation Sans', sans-serif;color:#1a1a1a;white-space:nowrap;-webkit-text-stroke:0.12px #1a1a1a;right:262.48px;transform-origin:100% 0;">00,03</div><div style="position:absolute;top:385.30px;font:normal 13px/13px 'Liberation Sans', sans-serif;color:#ff2020;white-space:nowrap;-webkit-text-stroke:0.12px #ff2020;right:176.48px;transform-origin:100% 0;">-9.902</div><div style="position:absolute;top:385.30px;font:normal 13px/13px 'Liberation Sans', sans-serif;color:#1a1a1a;white-space:nowrap;-webkit-text-stroke:0.12px #1a1a1a;right:77.48px;transform-origin:100% 0;">-924.138</div><div style="position:absolute;top:385.30px;font:normal 13px/13px 'Liberation Sans', sans-serif;color:#1a1a1a;white-space:nowrap;-webkit-text-stroke:0.12px #1a1a1a;right:6.48px;transform-origin:100% 0;">-09,82</div><div style="position:absolute;top:403.01px;font:normal 13px/13px 'Liberation Sans', sans-serif;color:#1a1a2a;white-space:nowrap;-webkit-text-stroke:0.12px #1a1a2a;left:13.98px;transform-origin:0 0;">12</div><div style="position:absolute;top:403.01px;font:normal 13px/13px 'Liberation Sans', sans-serif;color:#2a2a2a;white-space:nowrap;-webkit-text-stroke:0.12px #2a2a2a;left:35.88px;transform-origin:0 0;transform:scaleX(0.8927);">INTEGRAL YATIRIM MENKUL DEGERL</div><div style="position:absolute;top:403.01px;font:normal 13px/13px 'Liberation Sans', sans-serif;color:#1a1a1a;white-space:nowrap;-webkit-text-stroke:0.12px #1a1a1a;right:684.98px;transform-origin:100% 0;">132.834</div><div style="position:absolute;top:403.01px;font:normal 13px/13px 'Liberation Sans', sans-serif;color:#1a1a1a;white-space:nowrap;-webkit-text-stroke:0.12px #1a1a1a;right:578.88px;transform-origin:100% 0;">12.273.862</div><div style="position:absolute;top:403.01px;font:normal 13px/13px 'Liberation Sans', sans-serif;color:#1a1a1a;white-space:nowrap;-webkit-text-stroke:0.12px #1a1a1a;right:521.88px;transform-origin:100% 0;">00,05</div><div style="position:absolute;top:403.01px;font:normal 13px/13px 'Liberation Sans', sans-serif;color:#1a1a1a;white-space:nowrap;-webkit-text-stroke:0.12px #1a1a1a;right:429.08px;transform-origin:100% 0;">123.439</div><div style="position:absolute;top:403.01px;font:normal 13px/13px 'Liberation Sans', sans-serif;color:#1a1a1a;white-space:nowrap;-webkit-text-stroke:0.12px #1a1a1a;right:320.28px;transform-origin:100% 0;">11.393.420</div><div style="position:absolute;top:403.01px;font:normal 13px/13px 'Liberation Sans', sans-serif;color:#1a1a1a;white-space:nowrap;-webkit-text-stroke:0.12px #1a1a1a;right:262.48px;transform-origin:100% 0;">00,04</div><div style="position:absolute;top:403.01px;font:normal 13px/13px 'Liberation Sans', sans-serif;color:#ff2020;white-space:nowrap;-webkit-text-stroke:0.12px #ff2020;right:176.48px;transform-origin:100% 0;">-9.395</div><div style="position:absolute;top:403.01px;font:normal 13px/13px 'Liberation Sans', sans-serif;color:#1a1a1a;white-space:nowrap;-webkit-text-stroke:0.12px #1a1a1a;right:77.48px;transform-origin:100% 0;">-880.442</div><div style="position:absolute;top:403.01px;font:normal 13px/13px 'Liberation Sans', sans-serif;color:#1a1a1a;white-space:nowrap;-webkit-text-stroke:0.12px #1a1a1a;right:6.48px;transform-origin:100% 0;">-07,17</div><div style="position:absolute;top:420.72px;font:normal 13px/13px 'Liberation Sans', sans-serif;color:#1a1a2a;white-space:nowrap;-webkit-text-stroke:0.12px #1a1a2a;left:13.98px;transform-origin:0 0;">13</div><div style="position:absolute;top:420.72px;font:normal 13px/13px 'Liberation Sans', sans-serif;color:#2a2a2a;white-space:nowrap;-webkit-text-stroke:0.12px #2a2a2a;left:35.88px;transform-origin:0 0;transform:scaleX(0.9332);">MEKSA YATIRIM</div><div style="position:absolute;top:420.72px;font:normal 13px/13px 'Liberation Sans', sans-serif;color:#1a1a1a;white-space:nowrap;-webkit-text-stroke:0.12px #1a1a1a;right:684.98px;transform-origin:100% 0;">247.519</div><div style="position:absolute;top:420.72px;font:normal 13px/13px 'Liberation Sans', sans-serif;color:#1a1a1a;white-space:nowrap;-webkit-text-stroke:0.12px #1a1a1a;right:578.88px;transform-origin:100% 0;">22.870.756</div><div style="position:absolute;top:420.72px;font:normal 13px/13px 'Liberation Sans', sans-serif;color:#1a1a1a;white-space:nowrap;-webkit-text-stroke:0.12px #1a1a1a;right:521.88px;transform-origin:100% 0;">00,09</div><div style="position:absolute;top:420.72px;font:normal 13px/13px 'Liberation Sans', sans-serif;color:#1a1a1a;white-space:nowrap;-webkit-text-stroke:0.12px #1a1a1a;right:429.08px;transform-origin:100% 0;">245.222</div><div style="position:absolute;top:420.72px;font:normal 13px/13px 'Liberation Sans', sans-serif;color:#1a1a1a;white-space:nowrap;-webkit-text-stroke:0.12px #1a1a1a;right:320.28px;transform-origin:100% 0;">22.633.991</div><div style="position:absolute;top:420.72px;font:normal 13px/13px 'Liberation Sans', sans-serif;color:#1a1a1a;white-space:nowrap;-webkit-text-stroke:0.12px #1a1a1a;right:262.48px;transform-origin:100% 0;">00,09</div><div style="position:absolute;top:420.72px;font:normal 13px/13px 'Liberation Sans', sans-serif;color:#ff2020;white-space:nowrap;-webkit-text-stroke:0.12px #ff2020;right:176.48px;transform-origin:100% 0;">-2.297</div><div style="position:absolute;top:420.72px;font:normal 13px/13px 'Liberation Sans', sans-serif;color:#1a1a1a;white-space:nowrap;-webkit-text-stroke:0.12px #1a1a1a;right:77.48px;transform-origin:100% 0;">-236.765</div><div style="position:absolute;top:420.72px;font:normal 13px/13px 'Liberation Sans', sans-serif;color:#1a1a1a;white-space:nowrap;-webkit-text-stroke:0.12px #1a1a1a;right:6.48px;transform-origin:100% 0;">-01,04</div><div style="position:absolute;top:438.43px;font:normal 13px/13px 'Liberation Sans', sans-serif;color:#1a1a2a;white-space:nowrap;-webkit-text-stroke:0.12px #1a1a2a;left:13.98px;transform-origin:0 0;">14</div><div style="position:absolute;top:438.43px;font:normal 13px/13px 'Liberation Sans', sans-serif;color:#2a2a2a;white-space:nowrap;-webkit-text-stroke:0.12px #2a2a2a;left:35.88px;transform-origin:0 0;transform:scaleX(0.9040);">GCM YATIRIM MENKUL</div><div style="position:absolute;top:438.43px;font:normal 13px/13px 'Liberation Sans', sans-serif;color:#1a1a1a;white-space:nowrap;-webkit-text-stroke:0.12px #1a1a1a;right:684.98px;transform-origin:100% 0;">34.224</div><div style="position:absolute;top:438.43px;font:normal 13px/13px 'Liberation Sans', sans-serif;color:#1a1a1a;white-space:nowrap;-webkit-text-stroke:0.12px #1a1a1a;right:578.88px;transform-origin:100% 0;">3.162.298</div><div style="position:absolute;top:438.43px;font:normal 13px/13px 'Liberation Sans', sans-serif;color:#1a1a1a;white-space:nowrap;-webkit-text-stroke:0.12px #1a1a1a;right:521.88px;transform-origin:100% 0;">00,01</div><div style="position:absolute;top:438.43px;font:normal 13px/13px 'Liberation Sans', sans-serif;color:#1a1a1a;white-space:nowrap;-webkit-text-stroke:0.12px #1a1a1a;right:429.08px;transform-origin:100% 0;">32.484</div><div style="position:absolute;top:438.43px;font:normal 13px/13px 'Liberation Sans', sans-serif;color:#1a1a1a;white-space:nowrap;-webkit-text-stroke:0.12px #1a1a1a;right:320.28px;transform-origin:100% 0;">2.998.273</div><div style="position:absolute;top:438.43px;font:normal 13px/13px 'Liberation Sans', sans-serif;color:#1a1a1a;white-space:nowrap;-webkit-text-stroke:0.12px #1a1a1a;right:262.48px;transform-origin:100% 0;">00,01</div><div style="position:absolute;top:438.43px;font:normal 13px/13px 'Liberation Sans', sans-serif;color:#ff2020;white-space:nowrap;-webkit-text-stroke:0.12px #ff2020;right:176.48px;transform-origin:100% 0;">-1.740</div><div style="position:absolute;top:438.43px;font:normal 13px/13px 'Liberation Sans', sans-serif;color:#1a1a1a;white-space:nowrap;-webkit-text-stroke:0.12px #1a1a1a;right:77.48px;transform-origin:100% 0;">-164.024</div><div style="position:absolute;top:438.43px;font:normal 13px/13px 'Liberation Sans', sans-serif;color:#1a1a1a;white-space:nowrap;-webkit-text-stroke:0.12px #1a1a1a;right:6.48px;transform-origin:100% 0;">-05,19</div><div style="position:absolute;top:456.14px;font:normal 13px/13px 'Liberation Sans', sans-serif;color:#1a1a2a;white-space:nowrap;-webkit-text-stroke:0.12px #1a1a2a;left:13.98px;transform-origin:0 0;">15</div><div style="position:absolute;top:456.14px;font:normal 13px/13px 'Liberation Sans', sans-serif;color:#2a2a2a;white-space:nowrap;-webkit-text-stroke:0.12px #2a2a2a;left:35.88px;transform-origin:0 0;transform:scaleX(0.8757);">BLUPAY MENKUL</div><div style="position:absolute;top:456.14px;font:normal 13px/13px 'Liberation Sans', sans-serif;color:#1a1a1a;white-space:nowrap;-webkit-text-stroke:0.12px #1a1a1a;right:684.98px;transform-origin:100% 0;">2.196</div><div style="position:absolute;top:456.14px;font:normal 13px/13px 'Liberation Sans', sans-serif;color:#1a1a1a;white-space:nowrap;-webkit-text-stroke:0.12px #1a1a1a;right:578.88px;transform-origin:100% 0;">202.910</div><div style="position:absolute;top:456.14px;font:normal 13px/13px 'Liberation Sans', sans-serif;color:#1a1a1a;white-space:nowrap;-webkit-text-stroke:0.12px #1a1a1a;right:521.88px;transform-origin:100% 0;">00,00</div><div style="position:absolute;top:456.14px;font:normal 13px/13px 'Liberation Sans', sans-serif;color:#1a1a1a;white-space:nowrap;-webkit-text-stroke:0.12px #1a1a1a;right:429.08px;transform-origin:100% 0;">1.787</div><div style="position:absolute;top:456.14px;font:normal 13px/13px 'Liberation Sans', sans-serif;color:#1a1a1a;white-space:nowrap;-webkit-text-stroke:0.12px #1a1a1a;right:320.28px;transform-origin:100% 0;">164.940</div><div style="position:absolute;top:456.14px;font:normal 13px/13px 'Liberation Sans', sans-serif;color:#1a1a1a;white-space:nowrap;-webkit-text-stroke:0.12px #1a1a1a;right:262.48px;transform-origin:100% 0;">00,00</div><div style="position:absolute;top:456.14px;font:normal 13px/13px 'Liberation Sans', sans-serif;color:#ff2020;white-space:nowrap;-webkit-text-stroke:0.12px #ff2020;right:176.48px;transform-origin:100% 0;">-409</div><div style="position:absolute;top:456.14px;font:normal 13px/13px 'Liberation Sans', sans-serif;color:#1a1a1a;white-space:nowrap;-webkit-text-stroke:0.12px #1a1a1a;right:77.48px;transform-origin:100% 0;">-37.970</div><div style="position:absolute;top:456.14px;font:normal 13px/13px 'Liberation Sans', sans-serif;color:#1a1a1a;white-space:nowrap;-webkit-text-stroke:0.12px #1a1a1a;right:6.48px;transform-origin:100% 0;">-18,71</div><div style="position:absolute;top:473.85px;font:normal 13px/13px 'Liberation Sans', sans-serif;color:#1a1a2a;white-space:nowrap;-webkit-text-stroke:0.12px #1a1a2a;left:13.98px;transform-origin:0 0;">16</div><div style="position:absolute;top:473.85px;font:normal 13px/13px 'Liberation Sans', sans-serif;color:#2a2a2a;white-space:nowrap;-webkit-text-stroke:0.12px #2a2a2a;left:35.88px;transform-origin:0 0;transform:scaleX(0.8709);">IKON MENKUL DEGERLER</div><div style="position:absolute;top:473.85px;font:normal 13px/13px 'Liberation Sans', sans-serif;color:#1a1a1a;white-space:nowrap;-webkit-text-stroke:0.12px #1a1a1a;right:684.98px;transform-origin:100% 0;">5.962</div><div style="position:absolute;top:473.85px;font:normal 13px/13px 'Liberation Sans', sans-serif;color:#1a1a1a;white-space:nowrap;-webkit-text-stroke:0.12px #1a1a1a;right:578.88px;transform-origin:100% 0;">550.889</div><div style="position:absolute;top:473.85px;font:normal 13px/13px 'Liberation Sans', sans-serif;color:#1a1a1a;white-space:nowrap;-webkit-text-stroke:0.12px #1a1a1a;right:521.88px;transform-origin:100% 0;">00,00</div><div style="position:absolute;top:473.85px;font:normal 13px/13px 'Liberation Sans', sans-serif;color:#1a1a1a;white-space:nowrap;-webkit-text-stroke:0.12px #1a1a1a;right:429.08px;transform-origin:100% 0;">5.829</div><div style="position:absolute;top:473.85px;font:normal 13px/13px 'Liberation Sans', sans-serif;color:#1a1a1a;white-space:nowrap;-webkit-text-stroke:0.12px #1a1a1a;right:320.28px;transform-origin:100% 0;">538.017</div><div style="position:absolute;top:473.85px;font:normal 13px/13px 'Liberation Sans', sans-serif;color:#1a1a1a;white-space:nowrap;-webkit-text-stroke:0.12px #1a1a1a;right:262.48px;transform-origin:100% 0;">00,00</div><div style="position:absolute;top:473.85px;font:normal 13px/13px 'Liberation Sans', sans-serif;color:#ff2020;white-space:nowrap;-webkit-text-stroke:0.12px #ff2020;right:176.48px;transform-origin:100% 0;">-133</div><div style="position:absolute;top:473.85px;font:normal 13px/13px 'Liberation Sans', sans-serif;color:#1a1a1a;white-space:nowrap;-webkit-text-stroke:0.12px #1a1a1a;right:77.48px;transform-origin:100% 0;">-12.872</div><div style="position:absolute;top:473.85px;font:normal 13px/13px 'Liberation Sans', sans-serif;color:#1a1a1a;white-space:nowrap;-webkit-text-stroke:0.12px #1a1a1a;right:6.48px;transform-origin:100% 0;">-02,34</div></body></html>
